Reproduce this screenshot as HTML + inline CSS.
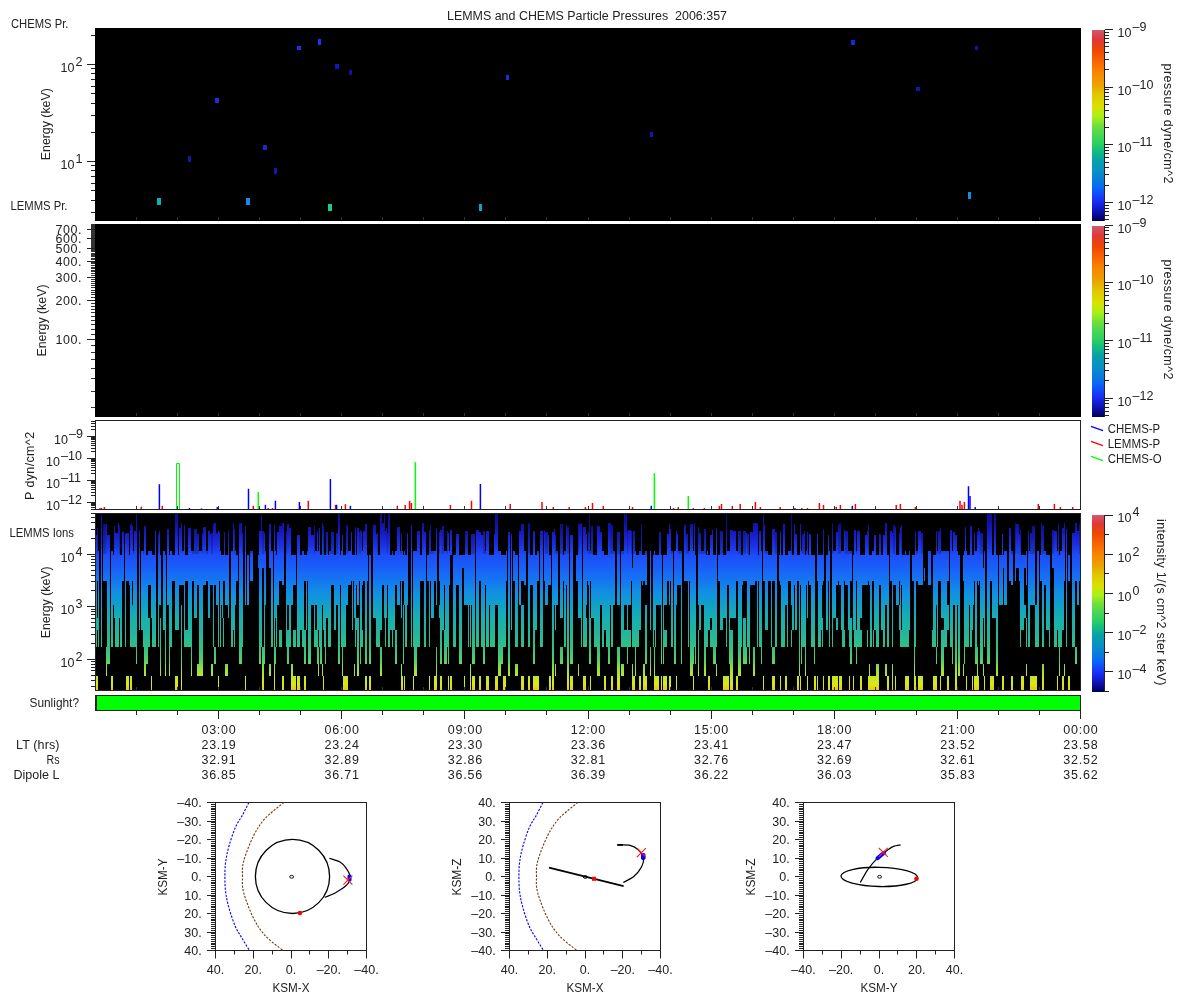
<!DOCTYPE html><html><head><meta charset="utf-8"><style>html,body{margin:0;padding:0;background:#fff;width:1200px;height:1000px;overflow:hidden}</style></head><body><svg width="1200" height="1000" viewBox="0 0 1200 1000" font-family='"Liberation Sans", sans-serif' style="display:block;will-change:transform">
<defs><linearGradient id="cb" x1="0" y1="0" x2="0" y2="1"><stop offset="0.000" stop-color="#d05a70"/><stop offset="0.050" stop-color="#e03838"/><stop offset="0.108" stop-color="#f04800"/><stop offset="0.170" stop-color="#f86800"/><stop offset="0.227" stop-color="#f88800"/><stop offset="0.284" stop-color="#eca000"/><stop offset="0.340" stop-color="#e0c800"/><stop offset="0.400" stop-color="#dce000"/><stop offset="0.455" stop-color="#a8f018"/><stop offset="0.500" stop-color="#70e038"/><stop offset="0.540" stop-color="#50d850"/><stop offset="0.597" stop-color="#28d060"/><stop offset="0.642" stop-color="#10b888"/><stop offset="0.682" stop-color="#08a0a8"/><stop offset="0.740" stop-color="#0890c8"/><stop offset="0.795" stop-color="#0878e0"/><stop offset="0.824" stop-color="#0868f8"/><stop offset="0.892" stop-color="#1830f8"/><stop offset="0.938" stop-color="#1018c0"/><stop offset="0.972" stop-color="#080890"/><stop offset="1.000" stop-color="#000050"/></linearGradient></defs>
<rect x="0" y="0" width="1200" height="1000" fill="#fff"/>
<text x="447" y="20" font-size="12.5" text-anchor="start" textLength="280" lengthAdjust="spacingAndGlyphs" fill="#222" >LEMMS and CHEMS Particle Pressures  2006:357</text>
<rect x="95" y="28" width="986" height="193" fill="#000"/>
<rect x="91" y="212" width="4" height="1" fill="#222"/>
<rect x="91" y="200" width="4" height="1" fill="#222"/>
<rect x="91" y="190" width="4" height="1" fill="#222"/>
<rect x="91" y="183" width="4" height="1" fill="#222"/>
<rect x="91" y="176" width="4" height="1" fill="#222"/>
<rect x="91" y="170" width="4" height="1" fill="#222"/>
<rect x="91" y="165" width="4" height="1" fill="#222"/>
<rect x="87" y="161" width="8" height="1" fill="#222"/>
<rect x="91" y="132" width="4" height="1" fill="#222"/>
<rect x="91" y="115" width="4" height="1" fill="#222"/>
<rect x="91" y="103" width="4" height="1" fill="#222"/>
<rect x="91" y="93" width="4" height="1" fill="#222"/>
<rect x="91" y="86" width="4" height="1" fill="#222"/>
<rect x="91" y="79" width="4" height="1" fill="#222"/>
<rect x="91" y="73" width="4" height="1" fill="#222"/>
<rect x="91" y="68" width="4" height="1" fill="#222"/>
<rect x="87" y="64" width="8" height="1" fill="#222"/>
<rect x="91" y="35" width="4" height="1" fill="#222"/>
<text x="60.5" y="71.8" font-size="12.5" text-anchor="start" fill="#222" >10</text>
<text x="75.5" y="65.8" font-size="12.5" text-anchor="start" fill="#222" >2</text>
<text x="60.5" y="168.8" font-size="12.5" text-anchor="start" fill="#222" >10</text>
<text x="75.5" y="162.8" font-size="12.5" text-anchor="start" fill="#222" >1</text>
<text x="11" y="28" font-size="12.5" text-anchor="start" textLength="57.5" lengthAdjust="spacingAndGlyphs" fill="#222" >CHEMS Pr.</text>
<text x="10.5" y="210" font-size="12.5" text-anchor="start" textLength="57" lengthAdjust="spacingAndGlyphs" fill="#222" >LEMMS Pr.</text>
<text transform="translate(50,124.2) rotate(-90)" font-size="12.5" text-anchor="middle" textLength="72" lengthAdjust="spacingAndGlyphs" fill="#222">Energy (keV)</text>
<rect x="157" y="198" width="4" height="7" fill="#10b0b0"/>
<rect x="188" y="156" width="3" height="6" fill="#1018a0"/>
<rect x="215" y="98" width="4" height="5" fill="#1830e0"/>
<rect x="246" y="198" width="4" height="7" fill="#1888f0"/>
<rect x="263" y="145" width="4" height="5" fill="#1828d0"/>
<rect x="274" y="168" width="3" height="6" fill="#1018b0"/>
<rect x="297" y="46" width="4" height="4" fill="#1830f0"/>
<rect x="318" y="39" width="3" height="6" fill="#1838f8"/>
<rect x="328" y="204" width="4" height="7" fill="#20c890"/>
<rect x="335" y="64" width="4" height="5" fill="#0c18c0"/>
<rect x="349" y="70" width="3" height="5" fill="#0c10a8"/>
<rect x="479" y="204" width="3" height="7" fill="#10a8c0"/>
<rect x="506" y="75" width="3" height="5" fill="#1830e0"/>
<rect x="650" y="132" width="3" height="5" fill="#1018b0"/>
<rect x="851" y="40" width="4" height="5" fill="#1828d8"/>
<rect x="916" y="87" width="4" height="4" fill="#1018b0"/>
<rect x="975" y="46" width="3" height="4" fill="#1018a8"/>
<rect x="968" y="192" width="3" height="7" fill="#1090e0"/>
<rect x="136" y="217" width="1" height="3" fill="#333"/>
<rect x="177" y="217" width="1" height="3" fill="#333"/>
<rect x="218" y="217" width="1" height="3" fill="#333"/>
<rect x="259" y="217" width="1" height="3" fill="#333"/>
<rect x="300" y="217" width="1" height="3" fill="#333"/>
<rect x="341" y="217" width="1" height="3" fill="#333"/>
<rect x="382" y="217" width="1" height="3" fill="#333"/>
<rect x="423" y="217" width="1" height="3" fill="#333"/>
<rect x="464" y="217" width="1" height="3" fill="#333"/>
<rect x="505" y="217" width="1" height="3" fill="#333"/>
<rect x="546" y="217" width="1" height="3" fill="#333"/>
<rect x="588" y="217" width="1" height="3" fill="#333"/>
<rect x="629" y="217" width="1" height="3" fill="#333"/>
<rect x="670" y="217" width="1" height="3" fill="#333"/>
<rect x="711" y="217" width="1" height="3" fill="#333"/>
<rect x="752" y="217" width="1" height="3" fill="#333"/>
<rect x="793" y="217" width="1" height="3" fill="#333"/>
<rect x="834" y="217" width="1" height="3" fill="#333"/>
<rect x="875" y="217" width="1" height="3" fill="#333"/>
<rect x="916" y="217" width="1" height="3" fill="#333"/>
<rect x="957" y="217" width="1" height="3" fill="#333"/>
<rect x="998" y="217" width="1" height="3" fill="#333"/>
<rect x="1039" y="217" width="1" height="3" fill="#333"/>
<rect x="95" y="224" width="986" height="193" fill="#000"/>
<rect x="91" y="407" width="4" height="1" fill="#333"/>
<rect x="91" y="391" width="4" height="1" fill="#333"/>
<rect x="91" y="378" width="4" height="1" fill="#333"/>
<rect x="91" y="368" width="4" height="1" fill="#333"/>
<rect x="91" y="359" width="4" height="1" fill="#333"/>
<rect x="91" y="352" width="4" height="1" fill="#333"/>
<rect x="91" y="345" width="4" height="1" fill="#333"/>
<rect x="87" y="339" width="8" height="1" fill="#222"/>
<rect x="91" y="334" width="4" height="1" fill="#333"/>
<rect x="91" y="329" width="4" height="1" fill="#333"/>
<rect x="91" y="324" width="4" height="1" fill="#333"/>
<rect x="91" y="320" width="4" height="1" fill="#333"/>
<rect x="91" y="316" width="4" height="1" fill="#333"/>
<rect x="91" y="312" width="4" height="1" fill="#333"/>
<rect x="91" y="309" width="4" height="1" fill="#333"/>
<rect x="91" y="306" width="4" height="1" fill="#333"/>
<rect x="91" y="303" width="4" height="1" fill="#333"/>
<rect x="87" y="300" width="8" height="1" fill="#222"/>
<rect x="91" y="297" width="4" height="1" fill="#333"/>
<rect x="91" y="294" width="4" height="1" fill="#333"/>
<rect x="91" y="292" width="4" height="1" fill="#333"/>
<rect x="91" y="290" width="4" height="1" fill="#333"/>
<rect x="91" y="287" width="4" height="1" fill="#333"/>
<rect x="91" y="285" width="4" height="1" fill="#333"/>
<rect x="91" y="283" width="4" height="1" fill="#333"/>
<rect x="91" y="281" width="4" height="1" fill="#333"/>
<rect x="91" y="279" width="4" height="1" fill="#333"/>
<rect x="87" y="277" width="8" height="1" fill="#222"/>
<rect x="91" y="275" width="4" height="1" fill="#333"/>
<rect x="91" y="273" width="4" height="1" fill="#333"/>
<rect x="91" y="271" width="4" height="1" fill="#333"/>
<rect x="91" y="270" width="4" height="1" fill="#333"/>
<rect x="91" y="268" width="4" height="1" fill="#333"/>
<rect x="91" y="267" width="4" height="1" fill="#333"/>
<rect x="91" y="265" width="4" height="1" fill="#333"/>
<rect x="91" y="263" width="4" height="1" fill="#333"/>
<rect x="91" y="262" width="4" height="1" fill="#333"/>
<rect x="87" y="261" width="8" height="1" fill="#222"/>
<rect x="91" y="259" width="4" height="1" fill="#333"/>
<rect x="91" y="258" width="4" height="1" fill="#333"/>
<rect x="91" y="256" width="4" height="1" fill="#333"/>
<rect x="91" y="255" width="4" height="1" fill="#333"/>
<rect x="91" y="254" width="4" height="1" fill="#333"/>
<rect x="91" y="253" width="4" height="1" fill="#333"/>
<rect x="91" y="251" width="4" height="1" fill="#333"/>
<rect x="91" y="250" width="4" height="1" fill="#333"/>
<rect x="91" y="249" width="4" height="1" fill="#333"/>
<rect x="87" y="248" width="8" height="1" fill="#222"/>
<rect x="91" y="247" width="4" height="1" fill="#333"/>
<rect x="91" y="246" width="4" height="1" fill="#333"/>
<rect x="91" y="245" width="4" height="1" fill="#333"/>
<rect x="91" y="244" width="4" height="1" fill="#333"/>
<rect x="91" y="243" width="4" height="1" fill="#333"/>
<rect x="91" y="242" width="4" height="1" fill="#333"/>
<rect x="91" y="241" width="4" height="1" fill="#333"/>
<rect x="91" y="240" width="4" height="1" fill="#333"/>
<rect x="91" y="239" width="4" height="1" fill="#333"/>
<rect x="87" y="238" width="8" height="1" fill="#222"/>
<rect x="91" y="237" width="4" height="1" fill="#333"/>
<rect x="91" y="236" width="4" height="1" fill="#333"/>
<rect x="91" y="235" width="4" height="1" fill="#333"/>
<rect x="91" y="234" width="4" height="1" fill="#333"/>
<rect x="91" y="233" width="4" height="1" fill="#333"/>
<rect x="91" y="232" width="4" height="1" fill="#333"/>
<rect x="91" y="231" width="4" height="1" fill="#333"/>
<rect x="91" y="231" width="4" height="1" fill="#333"/>
<rect x="91" y="230" width="4" height="1" fill="#333"/>
<rect x="87" y="229" width="8" height="1" fill="#222"/>
<rect x="91" y="228" width="4" height="1" fill="#333"/>
<rect x="91" y="227" width="4" height="1" fill="#333"/>
<rect x="91" y="227" width="4" height="1" fill="#333"/>
<rect x="91" y="226" width="4" height="1" fill="#333"/>
<rect x="91" y="225" width="4" height="1" fill="#333"/>
<rect x="91" y="224" width="4" height="1" fill="#333"/>
<rect x="91" y="224" width="4" height="1" fill="#333"/>
<text x="81.5" y="233.9" font-size="12.5" text-anchor="end" textLength="26" lengthAdjust="spacing" fill="#222" >700.</text>
<text x="81.5" y="242.6" font-size="12.5" text-anchor="end" textLength="26" lengthAdjust="spacing" fill="#222" >600.</text>
<text x="81.5" y="253.0" font-size="12.5" text-anchor="end" textLength="26" lengthAdjust="spacing" fill="#222" >500.</text>
<text x="81.5" y="265.6" font-size="12.5" text-anchor="end" textLength="26" lengthAdjust="spacing" fill="#222" >400.</text>
<text x="81.5" y="281.9" font-size="12.5" text-anchor="end" textLength="26" lengthAdjust="spacing" fill="#222" >300.</text>
<text x="81.5" y="304.8" font-size="12.5" text-anchor="end" textLength="26" lengthAdjust="spacing" fill="#222" >200.</text>
<text x="81.5" y="344.1" font-size="12.5" text-anchor="end" textLength="26" lengthAdjust="spacing" fill="#222" >100.</text>
<text transform="translate(45.5,320.5) rotate(-90)" font-size="12.5" text-anchor="middle" textLength="72" lengthAdjust="spacingAndGlyphs" fill="#222">Energy (keV)</text>
<rect x="136" y="413" width="1" height="3" fill="#333"/>
<rect x="177" y="413" width="1" height="3" fill="#333"/>
<rect x="218" y="413" width="1" height="3" fill="#333"/>
<rect x="259" y="413" width="1" height="3" fill="#333"/>
<rect x="300" y="413" width="1" height="3" fill="#333"/>
<rect x="341" y="413" width="1" height="3" fill="#333"/>
<rect x="382" y="413" width="1" height="3" fill="#333"/>
<rect x="423" y="413" width="1" height="3" fill="#333"/>
<rect x="464" y="413" width="1" height="3" fill="#333"/>
<rect x="505" y="413" width="1" height="3" fill="#333"/>
<rect x="546" y="413" width="1" height="3" fill="#333"/>
<rect x="588" y="413" width="1" height="3" fill="#333"/>
<rect x="629" y="413" width="1" height="3" fill="#333"/>
<rect x="670" y="413" width="1" height="3" fill="#333"/>
<rect x="711" y="413" width="1" height="3" fill="#333"/>
<rect x="752" y="413" width="1" height="3" fill="#333"/>
<rect x="793" y="413" width="1" height="3" fill="#333"/>
<rect x="834" y="413" width="1" height="3" fill="#333"/>
<rect x="875" y="413" width="1" height="3" fill="#333"/>
<rect x="916" y="413" width="1" height="3" fill="#333"/>
<rect x="957" y="413" width="1" height="3" fill="#333"/>
<rect x="998" y="413" width="1" height="3" fill="#333"/>
<rect x="1039" y="413" width="1" height="3" fill="#333"/>
<rect x="1092" y="30" width="12" height="191" fill="url(#cb)"/>
<rect x="1104" y="30" width="1" height="191" fill="#222"/>
<rect x="1105" y="29" width="8" height="1" fill="#222"/>
<rect x="1105" y="87" width="8" height="1" fill="#222"/>
<rect x="1105" y="144" width="8" height="1" fill="#222"/>
<rect x="1105" y="202" width="8" height="1" fill="#222"/>
<rect x="1105" y="69" width="4" height="1" fill="#222"/>
<rect x="1105" y="59" width="4" height="1" fill="#222"/>
<rect x="1105" y="52" width="4" height="1" fill="#222"/>
<rect x="1105" y="46" width="4" height="1" fill="#222"/>
<rect x="1105" y="42" width="4" height="1" fill="#222"/>
<rect x="1105" y="38" width="4" height="1" fill="#222"/>
<rect x="1105" y="35" width="4" height="1" fill="#222"/>
<rect x="1105" y="32" width="4" height="1" fill="#222"/>
<rect x="1105" y="127" width="4" height="1" fill="#222"/>
<rect x="1105" y="117" width="4" height="1" fill="#222"/>
<rect x="1105" y="110" width="4" height="1" fill="#222"/>
<rect x="1105" y="104" width="4" height="1" fill="#222"/>
<rect x="1105" y="99" width="4" height="1" fill="#222"/>
<rect x="1105" y="96" width="4" height="1" fill="#222"/>
<rect x="1105" y="92" width="4" height="1" fill="#222"/>
<rect x="1105" y="89" width="4" height="1" fill="#222"/>
<rect x="1105" y="185" width="4" height="1" fill="#222"/>
<rect x="1105" y="174" width="4" height="1" fill="#222"/>
<rect x="1105" y="167" width="4" height="1" fill="#222"/>
<rect x="1105" y="162" width="4" height="1" fill="#222"/>
<rect x="1105" y="157" width="4" height="1" fill="#222"/>
<rect x="1105" y="153" width="4" height="1" fill="#222"/>
<rect x="1105" y="150" width="4" height="1" fill="#222"/>
<rect x="1105" y="147" width="4" height="1" fill="#222"/>
<rect x="1105" y="219" width="4" height="1" fill="#222"/>
<rect x="1105" y="215" width="4" height="1" fill="#222"/>
<rect x="1105" y="211" width="4" height="1" fill="#222"/>
<rect x="1105" y="208" width="4" height="1" fill="#222"/>
<rect x="1105" y="205" width="4" height="1" fill="#222"/>
<text x="1117.5" y="36.8" font-size="12.5" text-anchor="start" fill="#222" >10</text>
<text x="1132.5" y="30.8" font-size="12.5" text-anchor="start" fill="#222" >–9</text>
<text x="1117.5" y="94.5" font-size="12.5" text-anchor="start" fill="#222" >10</text>
<text x="1132.5" y="88.5" font-size="12.5" text-anchor="start" fill="#222" >–10</text>
<text x="1117.5" y="152.1" font-size="12.5" text-anchor="start" fill="#222" >10</text>
<text x="1132.5" y="146.1" font-size="12.5" text-anchor="start" fill="#222" >–11</text>
<text x="1117.5" y="209.8" font-size="12.5" text-anchor="start" fill="#222" >10</text>
<text x="1132.5" y="203.8" font-size="12.5" text-anchor="start" fill="#222" >–12</text>
<text transform="translate(1164,123.5) rotate(90)" font-size="12.5" text-anchor="middle" textLength="120" lengthAdjust="spacing" fill="#222">pressure dyne/cm^2</text>
<rect x="1092" y="226" width="12" height="191" fill="url(#cb)"/>
<rect x="1104" y="226" width="1" height="191" fill="#222"/>
<rect x="1105" y="225" width="8" height="1" fill="#222"/>
<rect x="1105" y="282" width="8" height="1" fill="#222"/>
<rect x="1105" y="340" width="8" height="1" fill="#222"/>
<rect x="1105" y="398" width="8" height="1" fill="#222"/>
<rect x="1105" y="265" width="4" height="1" fill="#222"/>
<rect x="1105" y="255" width="4" height="1" fill="#222"/>
<rect x="1105" y="248" width="4" height="1" fill="#222"/>
<rect x="1105" y="242" width="4" height="1" fill="#222"/>
<rect x="1105" y="238" width="4" height="1" fill="#222"/>
<rect x="1105" y="234" width="4" height="1" fill="#222"/>
<rect x="1105" y="230" width="4" height="1" fill="#222"/>
<rect x="1105" y="227" width="4" height="1" fill="#222"/>
<rect x="1105" y="323" width="4" height="1" fill="#222"/>
<rect x="1105" y="313" width="4" height="1" fill="#222"/>
<rect x="1105" y="305" width="4" height="1" fill="#222"/>
<rect x="1105" y="300" width="4" height="1" fill="#222"/>
<rect x="1105" y="295" width="4" height="1" fill="#222"/>
<rect x="1105" y="291" width="4" height="1" fill="#222"/>
<rect x="1105" y="288" width="4" height="1" fill="#222"/>
<rect x="1105" y="285" width="4" height="1" fill="#222"/>
<rect x="1105" y="380" width="4" height="1" fill="#222"/>
<rect x="1105" y="370" width="4" height="1" fill="#222"/>
<rect x="1105" y="363" width="4" height="1" fill="#222"/>
<rect x="1105" y="358" width="4" height="1" fill="#222"/>
<rect x="1105" y="353" width="4" height="1" fill="#222"/>
<rect x="1105" y="349" width="4" height="1" fill="#222"/>
<rect x="1105" y="346" width="4" height="1" fill="#222"/>
<rect x="1105" y="343" width="4" height="1" fill="#222"/>
<rect x="1105" y="415" width="4" height="1" fill="#222"/>
<rect x="1105" y="411" width="4" height="1" fill="#222"/>
<rect x="1105" y="407" width="4" height="1" fill="#222"/>
<rect x="1105" y="403" width="4" height="1" fill="#222"/>
<rect x="1105" y="400" width="4" height="1" fill="#222"/>
<text x="1117.5" y="232.6" font-size="12.5" text-anchor="start" fill="#222" >10</text>
<text x="1132.5" y="226.6" font-size="12.5" text-anchor="start" fill="#222" >–9</text>
<text x="1117.5" y="290.3" font-size="12.5" text-anchor="start" fill="#222" >10</text>
<text x="1132.5" y="284.3" font-size="12.5" text-anchor="start" fill="#222" >–10</text>
<text x="1117.5" y="347.9" font-size="12.5" text-anchor="start" fill="#222" >10</text>
<text x="1132.5" y="341.9" font-size="12.5" text-anchor="start" fill="#222" >–11</text>
<text x="1117.5" y="405.6" font-size="12.5" text-anchor="start" fill="#222" >10</text>
<text x="1132.5" y="399.6" font-size="12.5" text-anchor="start" fill="#222" >–12</text>
<text transform="translate(1164,319.5) rotate(90)" font-size="12.5" text-anchor="middle" textLength="120" lengthAdjust="spacing" fill="#222">pressure dyne/cm^2</text>
<rect x="95" y="420" width="986" height="90" fill="#fff"/>
<rect x="91" y="509" width="4" height="1" fill="#222"/>
<rect x="91" y="507" width="4" height="1" fill="#222"/>
<rect x="91" y="505" width="4" height="1" fill="#222"/>
<rect x="91" y="504" width="4" height="1" fill="#222"/>
<rect x="91" y="503" width="4" height="1" fill="#222"/>
<rect x="87" y="502" width="8" height="1" fill="#222"/>
<rect x="91" y="495" width="4" height="1" fill="#222"/>
<rect x="91" y="492" width="4" height="1" fill="#222"/>
<rect x="91" y="489" width="4" height="1" fill="#222"/>
<rect x="91" y="487" width="4" height="1" fill="#222"/>
<rect x="91" y="485" width="4" height="1" fill="#222"/>
<rect x="91" y="483" width="4" height="1" fill="#222"/>
<rect x="91" y="482" width="4" height="1" fill="#222"/>
<rect x="91" y="481" width="4" height="1" fill="#222"/>
<rect x="87" y="480" width="8" height="1" fill="#222"/>
<rect x="91" y="473" width="4" height="1" fill="#222"/>
<rect x="91" y="470" width="4" height="1" fill="#222"/>
<rect x="91" y="467" width="4" height="1" fill="#222"/>
<rect x="91" y="465" width="4" height="1" fill="#222"/>
<rect x="91" y="463" width="4" height="1" fill="#222"/>
<rect x="91" y="461" width="4" height="1" fill="#222"/>
<rect x="91" y="460" width="4" height="1" fill="#222"/>
<rect x="91" y="459" width="4" height="1" fill="#222"/>
<rect x="87" y="458" width="8" height="1" fill="#222"/>
<rect x="91" y="451" width="4" height="1" fill="#222"/>
<rect x="91" y="448" width="4" height="1" fill="#222"/>
<rect x="91" y="445" width="4" height="1" fill="#222"/>
<rect x="91" y="443" width="4" height="1" fill="#222"/>
<rect x="91" y="441" width="4" height="1" fill="#222"/>
<rect x="91" y="439" width="4" height="1" fill="#222"/>
<rect x="91" y="438" width="4" height="1" fill="#222"/>
<rect x="91" y="437" width="4" height="1" fill="#222"/>
<rect x="87" y="436" width="8" height="1" fill="#222"/>
<rect x="91" y="429" width="4" height="1" fill="#222"/>
<rect x="91" y="426" width="4" height="1" fill="#222"/>
<rect x="91" y="423" width="4" height="1" fill="#222"/>
<rect x="91" y="421" width="4" height="1" fill="#222"/>
<text x="54" y="443.75" font-size="12.5" text-anchor="start" fill="#222" >10</text>
<text x="69" y="437.75" font-size="12.5" text-anchor="start" fill="#222" >–9</text>
<text x="46" y="465.75" font-size="12.5" text-anchor="start" fill="#222" >10</text>
<text x="61" y="459.75" font-size="12.5" text-anchor="start" fill="#222" >–10</text>
<text x="46" y="487.75" font-size="12.5" text-anchor="start" fill="#222" >10</text>
<text x="61" y="481.75" font-size="12.5" text-anchor="start" fill="#222" >–11</text>
<text x="46" y="509.75" font-size="12.5" text-anchor="start" fill="#222" >10</text>
<text x="61" y="503.75" font-size="12.5" text-anchor="start" fill="#222" >–12</text>
<text transform="translate(34,465.9) rotate(-90)" font-size="12.5" text-anchor="middle" textLength="68" lengthAdjust="spacing" fill="#222">P dyn/cm^2</text>
<rect x="136" y="506" width="1" height="3" fill="#333"/>
<rect x="177" y="506" width="1" height="3" fill="#333"/>
<rect x="218" y="506" width="1" height="3" fill="#333"/>
<rect x="259" y="506" width="1" height="3" fill="#333"/>
<rect x="300" y="506" width="1" height="3" fill="#333"/>
<rect x="341" y="506" width="1" height="3" fill="#333"/>
<rect x="382" y="506" width="1" height="3" fill="#333"/>
<rect x="423" y="506" width="1" height="3" fill="#333"/>
<rect x="464" y="506" width="1" height="3" fill="#333"/>
<rect x="505" y="506" width="1" height="3" fill="#333"/>
<rect x="546" y="506" width="1" height="3" fill="#333"/>
<rect x="588" y="506" width="1" height="3" fill="#333"/>
<rect x="629" y="506" width="1" height="3" fill="#333"/>
<rect x="670" y="506" width="1" height="3" fill="#333"/>
<rect x="711" y="506" width="1" height="3" fill="#333"/>
<rect x="752" y="506" width="1" height="3" fill="#333"/>
<rect x="793" y="506" width="1" height="3" fill="#333"/>
<rect x="834" y="506" width="1" height="3" fill="#333"/>
<rect x="875" y="506" width="1" height="3" fill="#333"/>
<rect x="916" y="506" width="1" height="3" fill="#333"/>
<rect x="957" y="506" width="1" height="3" fill="#333"/>
<rect x="998" y="506" width="1" height="3" fill="#333"/>
<rect x="1039" y="506" width="1" height="3" fill="#333"/>
<rect x="99.25" y="508" width="1.5" height="1" fill="#ff0000"/>
<rect x="100.75" y="508" width="1.5" height="1" fill="#ff0000"/>
<rect x="103.65" y="507" width="1.5" height="2" fill="#ff0000"/>
<rect x="140.55" y="506.7" width="1.5" height="2.3" fill="#ff0000"/>
<rect x="158.65" y="484.2" width="1.5" height="24.8" fill="#0000ff"/>
<rect x="161.55" y="505.8" width="1.5" height="3.2" fill="#ff0000"/>
<rect x="188.65" y="508" width="1.5" height="1" fill="#0000ff"/>
<rect x="200.75" y="508.3" width="1.5" height="0.7" fill="#ff0000"/>
<rect x="216.55" y="507" width="1.5" height="2" fill="#0000ff"/>
<rect x="247.75" y="488.75" width="1.5" height="20.25" fill="#0000ff"/>
<rect x="252.55" y="505.8" width="1.5" height="3.2" fill="#ff0000"/>
<rect x="257.55" y="492" width="1.5" height="17" fill="#00ff00"/>
<rect x="264.65" y="504.8" width="1.5" height="4.2" fill="#0000ff"/>
<rect x="267.55" y="508" width="1.5" height="1" fill="#ff0000"/>
<rect x="271.75" y="508" width="1.5" height="1" fill="#ff0000"/>
<rect x="274.65" y="500.8" width="1.5" height="8.2" fill="#0000ff"/>
<rect x="298.65" y="502" width="1.5" height="7" fill="#0000ff"/>
<rect x="307.55" y="500.8" width="1.5" height="8.2" fill="#ff0000"/>
<rect x="329.65" y="479" width="1.5" height="30" fill="#0000ff"/>
<rect x="334.85" y="504.8" width="1.5" height="4.2" fill="#ff0000"/>
<rect x="335.85" y="504.8" width="1.5" height="4.2" fill="#0000ff"/>
<rect x="344.65" y="504.2" width="1.5" height="4.8" fill="#ff0000"/>
<rect x="349.65" y="505.8" width="1.5" height="3.2" fill="#0000ff"/>
<rect x="396.55" y="505.8" width="1.5" height="3.2" fill="#ff0000"/>
<rect x="404.45" y="505" width="1.5" height="4" fill="#ff0000"/>
<rect x="408.85" y="500.8" width="1.5" height="8.2" fill="#ff0000"/>
<rect x="410.65" y="503" width="1.5" height="6" fill="#ff0000"/>
<rect x="414.65" y="462.1" width="1.5" height="46.9" fill="#00ff00"/>
<rect x="449.65" y="505" width="1.5" height="4" fill="#ff0000"/>
<rect x="470.75" y="500.8" width="1.5" height="8.2" fill="#ff0000"/>
<rect x="479.65" y="484" width="1.5" height="25" fill="#0000ff"/>
<rect x="509.45" y="504" width="1.5" height="5" fill="#ff0000"/>
<rect x="541.25" y="501.9" width="1.5" height="7.1" fill="#ff0000"/>
<rect x="552.55" y="507" width="1.5" height="2" fill="#ff0000"/>
<rect x="568.45" y="507" width="1.5" height="2" fill="#ff0000"/>
<rect x="584.65" y="507" width="1.5" height="2" fill="#ff0000"/>
<rect x="591.75" y="502.9" width="1.5" height="6.1" fill="#ff0000"/>
<rect x="602.55" y="506" width="1.5" height="3" fill="#ff0000"/>
<rect x="631.75" y="507" width="1.5" height="2" fill="#ff0000"/>
<rect x="650.5" y="505.8" width="1.5" height="3.2" fill="#0000ff"/>
<rect x="653.65" y="473.1" width="1.5" height="35.9" fill="#00ff00"/>
<rect x="672.75" y="508" width="1.5" height="1" fill="#ff0000"/>
<rect x="677.55" y="507" width="1.5" height="2" fill="#ff0000"/>
<rect x="687.55" y="496" width="1.5" height="13" fill="#00ff00"/>
<rect x="692.55" y="508" width="1.5" height="1" fill="#ff0000"/>
<rect x="703.65" y="508" width="1.5" height="1" fill="#ff0000"/>
<rect x="718.65" y="506" width="1.5" height="3" fill="#ff0000"/>
<rect x="720.75" y="504" width="1.5" height="5" fill="#ff0000"/>
<rect x="731.55" y="506" width="1.5" height="3" fill="#ff0000"/>
<rect x="739.45" y="504" width="1.5" height="5" fill="#ff0000"/>
<rect x="754.65" y="501.9" width="1.5" height="7.1" fill="#ff0000"/>
<rect x="759.65" y="507" width="1.5" height="2" fill="#ff0000"/>
<rect x="779.45" y="507" width="1.5" height="2" fill="#ff0000"/>
<rect x="794.25" y="508" width="1.5" height="1" fill="#ff0000"/>
<rect x="800.95" y="508" width="1.5" height="1" fill="#ff0000"/>
<rect x="806.75" y="508" width="1.5" height="1" fill="#ff0000"/>
<rect x="818.65" y="503" width="1.5" height="6" fill="#ff0000"/>
<rect x="822.75" y="505" width="1.5" height="4" fill="#ff0000"/>
<rect x="835.5" y="507" width="1.5" height="2" fill="#ff0000"/>
<rect x="839.65" y="505" width="1.5" height="4" fill="#ff0000"/>
<rect x="851.55" y="505.8" width="1.5" height="3.2" fill="#0000ff"/>
<rect x="854.65" y="504" width="1.5" height="5" fill="#ff0000"/>
<rect x="895.5" y="505" width="1.5" height="4" fill="#ff0000"/>
<rect x="899.65" y="504" width="1.5" height="5" fill="#ff0000"/>
<rect x="914.65" y="507" width="1.5" height="2" fill="#ff0000"/>
<rect x="959.25" y="500.8" width="1.5" height="8.2" fill="#ff0000"/>
<rect x="961.25" y="505" width="1.5" height="4" fill="#ff0000"/>
<rect x="963.65" y="502" width="1.5" height="7" fill="#ff0000"/>
<rect x="967.75" y="486.25" width="1.5" height="22.75" fill="#0000ff"/>
<rect x="969.25" y="496" width="1.5" height="13" fill="#0000ff"/>
<rect x="974.45" y="507" width="1.5" height="2" fill="#0000ff"/>
<rect x="1037.55" y="504" width="1.5" height="5" fill="#ff0000"/>
<rect x="1053.65" y="504" width="1.5" height="5" fill="#ff0000"/>
<rect x="1059.65" y="507" width="1.5" height="2" fill="#ff0000"/>
<rect x="1071.95" y="507" width="1.5" height="2" fill="#ff0000"/>
<path d="M176.5 509 V463.5 H179.5 V509" fill="none" stroke="#00ff00" stroke-width="1"/>
<rect x="95.5" y="420.5" width="985" height="89" fill="none" stroke="#222" stroke-width="1"/>
<line x1="1091" y1="426.3" x2="1103" y2="430.7" stroke="#0000ff" stroke-width="1.3"/>
<text x="1107.7" y="433" font-size="12.5" text-anchor="start" textLength="52.5" lengthAdjust="spacingAndGlyphs" fill="#222" >CHEMS-P</text>
<line x1="1091" y1="441.3" x2="1103" y2="445.7" stroke="#ff0000" stroke-width="1.3"/>
<text x="1107.7" y="448" font-size="12.5" text-anchor="start" textLength="52.5" lengthAdjust="spacingAndGlyphs" fill="#222" >LEMMS-P</text>
<line x1="1091" y1="456.3" x2="1103" y2="460.7" stroke="#00ff00" stroke-width="1.3"/>
<text x="1107.7" y="463" font-size="12.5" text-anchor="start" textLength="54" lengthAdjust="spacingAndGlyphs" fill="#222" >CHEMS-O</text>
<defs><linearGradient id="spec" x1="0" y1="0" x2="0" y2="1"><stop offset="0.0056" stop-color="#0c0c90"/><stop offset="0.0562" stop-color="#1010a8"/><stop offset="0.1011" stop-color="#1418c0"/><stop offset="0.1798" stop-color="#1c30e0"/><stop offset="0.2360" stop-color="#1c4cf8"/><stop offset="0.3090" stop-color="#1860f8"/><stop offset="0.3820" stop-color="#1478f0"/><stop offset="0.4607" stop-color="#1094e0"/><stop offset="0.5169" stop-color="#10a0c8"/><stop offset="0.5899" stop-color="#18b0b0"/><stop offset="0.6573" stop-color="#20b4a0"/><stop offset="0.7528" stop-color="#30c088"/><stop offset="0.8258" stop-color="#50d068"/><stop offset="0.8708" stop-color="#90e040"/><stop offset="0.9213" stop-color="#c4e428"/><stop offset="0.9607" stop-color="#dce818"/><stop offset="1.0000" stop-color="#e4c810"/></linearGradient></defs>
<rect x="95" y="513" width="986" height="178" fill="url(#spec)"/>
<path fill="#000" fill-opacity="0.18" d="M97 514h1v40h-1zM99 514h2v40h-2zM103 514h3v40h-3zM110 514h1v40h-1zM119 514h1v40h-1zM129 514h1v40h-1zM133 514h1v40h-1zM137 514h2v40h-2zM139 514h1v40h-1zM143 514h1v40h-1zM150 514h1v40h-1zM158 514h1v40h-1zM161 514h2v40h-2zM185 514h3v40h-3zM192 514h2v40h-2zM194 514h3v40h-3zM197 514h2v40h-2zM202 514h1v40h-1zM206 514h2v40h-2zM211 514h2v40h-2zM223 514h1v40h-1zM224 514h1v40h-1zM228 514h1v40h-1zM229 514h1v40h-1zM234 514h1v40h-1zM238 514h1v40h-1zM242 514h1v40h-1zM244 514h1v40h-1zM249 514h1v40h-1zM250 514h3v40h-3zM262 514h2v40h-2zM265 514h1v40h-1zM266 514h2v40h-2zM268 514h1v40h-1zM273 514h1v40h-1zM276 514h1v40h-1zM285 514h1v40h-1zM286 514h1v40h-1zM307 514h1v40h-1zM314 514h1v40h-1zM323 514h1v40h-1zM326 514h2v40h-2zM329 514h2v40h-2zM331 514h3v40h-3zM336 514h2v40h-2zM340 514h1v40h-1zM346 514h2v40h-2zM352 514h1v40h-1zM356 514h1v40h-1zM359 514h1v40h-1zM360 514h1v40h-1zM371 514h2v40h-2zM377 514h1v40h-1zM378 514h2v40h-2zM387 514h1v40h-1zM392 514h1v40h-1zM400 514h1v40h-1zM401 514h1v40h-1zM403 514h1v40h-1zM405 514h2v40h-2zM408 514h1v40h-1zM409 514h1v40h-1zM429 514h1v40h-1zM430 514h1v40h-1zM431 514h3v40h-3zM437 514h2v40h-2zM439 514h1v40h-1zM442 514h2v40h-2zM447 514h1v40h-1zM453 514h3v40h-3zM459 514h3v40h-3zM465 514h3v40h-3zM468 514h1v40h-1zM471 514h1v40h-1zM472 514h3v40h-3zM483 514h2v40h-2zM485 514h1v40h-1zM510 514h1v40h-1zM526 514h1v40h-1zM527 514h1v40h-1zM528 514h2v40h-2zM537 514h2v40h-2zM543 514h1v40h-1zM545 514h3v40h-3zM555 514h1v40h-1zM556 514h2v40h-2zM558 514h1v40h-1zM560 514h3v40h-3zM563 514h1v40h-1zM564 514h2v40h-2zM567 514h2v40h-2zM569 514h1v40h-1zM578 514h1v40h-1zM582 514h1v40h-1zM588 514h1v40h-1zM589 514h1v40h-1zM590 514h1v40h-1zM591 514h2v40h-2zM593 514h1v40h-1zM604 514h2v40h-2zM610 514h1v40h-1zM611 514h2v40h-2zM613 514h2v40h-2zM617 514h3v40h-3zM621 514h3v40h-3zM627 514h1v40h-1zM631 514h1v40h-1zM633 514h2v40h-2zM636 514h3v40h-3zM639 514h2v40h-2zM641 514h1v40h-1zM642 514h1v40h-1zM645 514h2v40h-2zM655 514h1v40h-1zM659 514h2v40h-2zM662 514h1v40h-1zM671 514h2v40h-2zM678 514h3v40h-3zM681 514h1v40h-1zM686 514h2v40h-2zM688 514h1v40h-1zM697 514h1v40h-1zM698 514h1v40h-1zM699 514h2v40h-2zM701 514h3v40h-3zM704 514h2v40h-2zM708 514h2v40h-2zM720 514h3v40h-3zM723 514h3v40h-3zM726 514h1v40h-1zM738 514h3v40h-3zM741 514h1v40h-1zM743 514h3v40h-3zM747 514h2v40h-2zM758 514h1v40h-1zM762 514h1v40h-1zM765 514h3v40h-3zM771 514h1v40h-1zM775 514h2v40h-2zM791 514h1v40h-1zM792 514h2v40h-2zM797 514h2v40h-2zM802 514h2v40h-2zM804 514h1v40h-1zM806 514h1v40h-1zM807 514h1v40h-1zM815 514h1v40h-1zM816 514h1v40h-1zM823 514h1v40h-1zM832 514h1v40h-1zM838 514h1v40h-1zM839 514h2v40h-2zM845 514h3v40h-3zM848 514h1v40h-1zM849 514h1v40h-1zM850 514h2v40h-2zM856 514h1v40h-1zM868 514h1v40h-1zM870 514h2v40h-2zM876 514h3v40h-3zM879 514h2v40h-2zM889 514h1v40h-1zM893 514h2v40h-2zM899 514h1v40h-1zM901 514h1v40h-1zM906 514h3v40h-3zM909 514h1v40h-1zM912 514h2v40h-2zM915 514h1v40h-1zM916 514h2v40h-2zM921 514h2v40h-2zM923 514h1v40h-1zM924 514h1v40h-1zM925 514h1v40h-1zM931 514h1v40h-1zM932 514h1v40h-1zM933 514h3v40h-3zM936 514h1v40h-1zM938 514h2v40h-2zM940 514h1v40h-1zM961 514h1v40h-1zM962 514h1v40h-1zM969 514h1v40h-1zM972 514h1v40h-1zM974 514h1v40h-1zM980 514h3v40h-3zM984 514h1v40h-1zM996 514h2v40h-2zM1008 514h1v40h-1zM1011 514h2v40h-2zM1015 514h1v40h-1zM1020 514h1v40h-1zM1028 514h1v40h-1zM1030 514h2v40h-2zM1032 514h3v40h-3zM1040 514h1v40h-1zM1041 514h1v40h-1zM1042 514h2v40h-2zM1046 514h3v40h-3zM1049 514h1v40h-1zM1051 514h1v40h-1zM1052 514h2v40h-2zM1058 514h1v40h-1zM1067 514h1v40h-1zM1079 514h1v40h-1z"/>
<path fill="#000" d="M96 514h1v21h-1zM96 647h1v29h-1zM97 514h1v14h-1zM97 581h1v37h-1zM97 630h1v46h-1zM98 514h1v37h-1zM98 647h1v44h-1zM99 514h2v177h-2zM101 647h1v44h-1zM102 514h1v177h-1zM103 514h3v10h-3zM103 581h3v110h-3zM106 514h1v10h-1zM106 581h1v66h-1zM106 676h1v15h-1zM107 514h3v21h-3zM107 664h3v27h-3zM110 514h1v177h-1zM111 514h2v37h-2zM111 647h2v29h-2zM113 514h1v41h-1zM113 605h1v86h-1zM114 514h1v12h-1zM114 618h1v73h-1zM115 514h3v19h-3zM115 647h3v44h-3zM118 514h1v9h-1zM118 647h1v44h-1zM119 514h1v11h-1zM119 618h1v73h-1zM120 514h2v41h-2zM120 647h2v44h-2zM122 514h2v18h-2zM122 581h2v110h-2zM124 514h1v177h-1zM125 514h1v20h-1zM125 647h1v44h-1zM126 514h3v19h-3zM126 581h3v95h-3zM129 514h1v41h-1zM129 585h1v106h-1zM130 514h2v10h-2zM130 647h2v29h-2zM132 514h1v12h-1zM132 581h1v24h-1zM132 647h1v44h-1zM133 514h1v37h-1zM133 647h1v44h-1zM134 514h2v17h-2zM134 647h2v44h-2zM136 664h1v27h-1zM137 514h2v177h-2zM139 514h1v16h-1zM139 630h1v61h-1zM140 514h1v177h-1zM141 514h2v37h-2zM141 630h2v61h-2zM143 514h1v37h-1zM143 647h1v44h-1zM144 514h2v12h-2zM144 676h2v15h-2zM146 514h2v41h-2zM146 664h2v27h-2zM148 514h2v37h-2zM148 585h2v33h-2zM148 647h2v44h-2zM150 514h1v37h-1zM150 585h1v106h-1zM151 514h1v37h-1zM151 618h1v58h-1zM152 514h3v41h-3zM152 647h3v44h-3zM155 514h1v17h-1zM155 647h1v44h-1zM156 514h2v177h-2zM158 514h1v20h-1zM158 647h1v44h-1zM159 514h1v17h-1zM159 605h1v86h-1zM160 514h1v41h-1zM160 605h1v13h-1zM160 676h1v15h-1zM161 514h2v177h-2zM163 514h2v37h-2zM163 630h2v61h-2zM165 514h1v41h-1zM165 676h1v15h-1zM166 514h1v177h-1zM167 514h2v15h-2zM167 605h2v86h-2zM169 514h1v41h-1zM169 676h1v15h-1zM170 514h2v37h-2zM170 647h2v44h-2zM172 514h2v41h-2zM172 581h2v110h-2zM174 514h1v41h-1zM174 581h1v110h-1zM175 630h3v46h-3zM178 514h1v41h-1zM178 630h1v61h-1zM179 514h2v14h-2zM179 585h2v106h-2zM181 514h1v9h-1zM181 585h1v20h-1zM182 514h2v37h-2zM182 585h2v106h-2zM184 514h1v11h-1zM184 647h1v44h-1zM185 514h3v41h-3zM185 581h3v49h-3zM185 647h3v44h-3zM188 514h3v14h-3zM188 647h3v44h-3zM191 514h1v37h-1zM191 676h1v15h-1zM192 514h2v37h-2zM192 581h2v110h-2zM194 514h3v15h-3zM194 618h3v73h-3zM197 514h2v20h-2zM197 585h2v79h-2zM197 676h2v15h-2zM199 514h3v37h-3zM199 676h3v15h-3zM202 514h1v19h-1zM202 676h1v15h-1zM203 514h3v13h-3zM203 585h3v106h-3zM206 514h2v37h-2zM206 581h2v110h-2zM208 514h2v17h-2zM208 618h2v73h-2zM210 514h1v20h-1zM210 585h1v106h-1zM211 514h2v19h-2zM211 585h2v79h-2zM211 676h2v15h-2zM213 514h1v10h-1zM213 647h1v44h-1zM214 514h2v9h-2zM214 585h2v62h-2zM214 664h2v27h-2zM216 514h2v19h-2zM216 605h2v86h-2zM218 514h1v17h-1zM218 647h1v29h-1zM219 514h1v18h-1zM219 581h1v110h-1zM220 514h1v37h-1zM220 647h1v44h-1zM221 514h1v41h-1zM221 605h1v86h-1zM222 514h1v41h-1zM222 618h1v73h-1zM223 514h1v41h-1zM223 581h1v37h-1zM223 647h1v44h-1zM224 514h1v18h-1zM224 581h1v110h-1zM225 514h3v41h-3zM225 605h3v59h-3zM225 676h3v15h-3zM228 514h1v17h-1zM228 618h1v73h-1zM229 514h1v177h-1zM230 514h1v177h-1zM231 514h2v37h-2zM231 647h2v44h-2zM233 514h1v9h-1zM233 630h1v61h-1zM234 514h1v15h-1zM234 647h1v44h-1zM235 514h1v37h-1zM235 605h1v86h-1zM236 514h2v41h-2zM236 581h2v110h-2zM238 514h1v177h-1zM239 514h3v9h-3zM239 664h3v27h-3zM242 514h1v19h-1zM242 647h1v44h-1zM243 514h1v177h-1zM244 514h1v177h-1zM245 514h1v12h-1zM245 605h1v71h-1zM246 514h1v177h-1zM247 514h2v41h-2zM247 605h2v86h-2zM249 514h1v177h-1zM250 514h3v37h-3zM250 581h3v110h-3zM253 514h2v177h-2zM255 514h3v177h-3zM258 514h1v41h-1zM258 568h1v123h-1zM259 514h2v17h-2zM259 664h2v27h-2zM261 647h1v44h-1zM262 514h2v17h-2zM262 568h2v79h-2zM264 514h1v19h-1zM264 664h1v27h-1zM265 514h1v37h-1zM265 605h1v86h-1zM266 514h2v177h-2zM268 514h1v177h-1zM269 514h2v10h-2zM269 568h2v96h-2zM269 676h2v15h-2zM271 514h2v37h-2zM271 647h2v44h-2zM273 514h1v177h-1zM274 514h1v11h-1zM275 514h1v37h-1zM275 618h1v29h-1zM275 664h1v27h-1zM276 514h1v41h-1zM276 647h1v44h-1zM277 514h2v18h-2zM277 605h2v86h-2zM279 514h3v12h-3zM279 581h3v49h-3zM279 647h3v44h-3zM282 514h2v9h-2zM282 585h2v91h-2zM284 514h1v177h-1zM285 514h1v177h-1zM286 514h1v17h-1zM286 647h1v44h-1zM287 514h2v10h-2zM287 605h2v25h-2zM287 664h2v27h-2zM289 514h2v14h-2zM289 647h2v44h-2zM291 514h2v41h-2zM291 605h2v59h-2zM293 514h3v41h-3zM293 585h3v45h-3zM293 647h3v29h-3zM296 514h1v177h-1zM297 514h3v21h-3zM297 647h3v29h-3zM300 514h2v41h-2zM300 630h2v61h-2zM302 514h2v37h-2zM302 647h2v44h-2zM304 514h2v41h-2zM304 581h2v49h-2zM304 664h2v12h-2zM306 514h1v41h-1zM306 630h1v61h-1zM307 514h1v37h-1zM307 581h1v110h-1zM308 514h3v13h-3zM308 664h3v27h-3zM311 514h3v21h-3zM311 605h3v86h-3zM314 514h1v12h-1zM314 647h1v44h-1zM315 514h2v37h-2zM315 605h2v25h-2zM315 647h2v44h-2zM317 514h1v17h-1zM317 664h1v27h-1zM318 514h1v37h-1zM318 630h1v17h-1zM318 676h1v15h-1zM319 514h1v14h-1zM319 647h1v44h-1zM320 514h2v41h-2zM320 664h2v27h-2zM322 514h1v9h-1zM322 605h1v59h-1zM322 676h1v15h-1zM323 514h1v12h-1zM323 630h1v46h-1zM324 514h1v41h-1zM324 647h1v44h-1zM325 514h1v41h-1zM325 664h1v27h-1zM326 514h2v18h-2zM326 618h2v73h-2zM328 514h1v41h-1zM328 647h1v44h-1zM329 514h2v37h-2zM329 647h2v44h-2zM331 514h3v18h-3zM331 585h3v106h-3zM334 514h2v41h-2zM334 630h2v61h-2zM336 514h2v19h-2zM336 605h2v86h-2zM338 664h2v27h-2zM340 514h1v41h-1zM340 585h1v106h-1zM341 514h1v37h-1zM341 647h1v44h-1zM342 514h1v21h-1zM342 676h1v15h-1zM343 514h3v41h-3zM343 647h3v29h-3zM346 514h2v11h-2zM346 605h2v71h-2zM348 514h3v37h-3zM348 585h3v106h-3zM351 514h1v18h-1zM351 581h1v110h-1zM352 514h1v41h-1zM352 630h1v61h-1zM353 514h1v41h-1zM353 581h1v110h-1zM354 514h1v41h-1zM354 618h1v46h-1zM354 676h1v15h-1zM355 514h1v13h-1zM355 647h1v44h-1zM356 514h1v41h-1zM356 585h1v33h-1zM356 630h1v61h-1zM357 514h2v14h-2zM357 605h2v13h-2zM357 676h2v15h-2zM359 514h1v18h-1zM359 581h1v110h-1zM360 514h1v16h-1zM360 664h1v27h-1zM361 514h1v17h-1zM361 647h1v44h-1zM362 514h1v37h-1zM362 585h1v45h-1zM362 647h1v44h-1zM363 514h2v17h-2zM363 581h2v110h-2zM365 514h2v10h-2zM365 664h2v12h-2zM367 514h1v41h-1zM367 581h1v110h-1zM368 514h1v177h-1zM369 514h2v41h-2zM369 664h2v12h-2zM371 514h2v177h-2zM373 514h3v11h-3zM373 618h3v73h-3zM376 514h1v20h-1zM376 647h1v44h-1zM377 514h1v19h-1zM377 647h1v44h-1zM378 514h2v41h-2zM378 647h2v44h-2zM380 630h2v17h-2zM380 676h2v15h-2zM382 514h2v9h-2zM382 585h2v106h-2zM384 618h1v73h-1zM385 514h1v17h-1zM385 647h1v44h-1zM386 514h1v14h-1zM386 618h1v73h-1zM387 514h1v19h-1zM387 585h1v106h-1zM388 647h2v44h-2zM390 514h2v41h-2zM390 630h2v61h-2zM392 514h1v37h-1zM392 647h1v44h-1zM393 514h2v41h-2zM393 630h2v61h-2zM395 514h2v37h-2zM395 585h2v45h-2zM395 664h2v27h-2zM397 514h3v13h-3zM397 605h3v86h-3zM400 514h1v37h-1zM400 581h1v110h-1zM401 514h1v19h-1zM401 618h1v46h-1zM402 514h1v37h-1zM402 581h1v95h-1zM403 514h1v41h-1zM403 581h1v24h-1zM403 664h1v27h-1zM404 514h1v37h-1zM404 605h1v71h-1zM405 514h2v41h-2zM405 647h2v44h-2zM407 514h1v19h-1zM407 605h1v86h-1zM408 514h1v177h-1zM409 514h1v177h-1zM410 514h1v177h-1zM411 514h1v11h-1zM411 647h1v44h-1zM412 514h1v177h-1zM413 514h1v37h-1zM413 647h1v29h-1zM414 514h3v37h-3zM414 676h3v15h-3zM417 514h3v17h-3zM417 647h3v44h-3zM420 514h2v41h-2zM420 581h2v110h-2zM422 514h2v9h-2zM422 581h2v110h-2zM424 514h1v18h-1zM424 647h1v44h-1zM425 514h1v18h-1zM425 647h1v44h-1zM426 514h1v177h-1zM427 514h2v41h-2zM427 581h2v110h-2zM429 514h1v16h-1zM429 647h1v29h-1zM430 514h1v11h-1zM430 581h1v110h-1zM431 514h3v37h-3zM431 618h3v73h-3zM434 514h2v37h-2zM434 581h2v95h-2zM436 514h1v14h-1zM436 605h1v42h-1zM437 514h2v177h-2zM439 514h1v18h-1zM439 581h1v24h-1zM439 618h1v73h-1zM440 514h2v16h-2zM440 664h2v12h-2zM442 514h2v12h-2zM442 630h2v61h-2zM444 514h1v37h-1zM444 585h1v45h-1zM444 664h1v27h-1zM445 514h2v37h-2zM445 664h2v27h-2zM447 514h1v17h-1zM447 647h1v44h-1zM448 514h1v19h-1zM448 664h1v12h-1zM449 514h1v37h-1zM449 585h1v106h-1zM450 514h2v16h-2zM450 555h2v121h-2zM452 514h1v177h-1zM453 514h3v41h-3zM453 647h3v44h-3zM456 514h3v20h-3zM456 585h3v106h-3zM459 514h3v41h-3zM459 664h3v27h-3zM462 514h2v41h-2zM462 568h2v123h-2zM464 514h1v41h-1zM464 605h1v71h-1zM465 514h3v17h-3zM465 605h3v86h-3zM468 514h1v41h-1zM468 647h1v44h-1zM469 514h1v41h-1zM469 605h1v86h-1zM470 514h1v41h-1zM470 647h1v17h-1zM471 514h1v20h-1zM471 605h1v86h-1zM472 514h3v20h-3zM472 664h3v12h-3zM475 514h1v177h-1zM476 514h3v16h-3zM476 647h3v44h-3zM479 514h2v18h-2zM479 581h2v95h-2zM481 514h2v21h-2zM481 647h2v44h-2zM483 514h2v17h-2zM483 664h2v27h-2zM485 514h1v37h-1zM485 585h1v106h-1zM486 514h3v17h-3zM486 647h3v29h-3zM489 514h1v41h-1zM489 605h1v86h-1zM490 514h3v41h-3zM490 647h3v44h-3zM493 514h1v41h-1zM493 647h1v44h-1zM494 514h1v20h-1zM494 647h1v44h-1zM495 605h3v71h-3zM498 514h3v37h-3zM498 676h3v15h-3zM501 514h2v41h-2zM501 664h2v27h-2zM503 514h3v41h-3zM503 647h3v29h-3zM506 514h1v37h-1zM506 581h1v110h-1zM507 514h1v177h-1zM508 514h2v18h-2zM508 676h2v15h-2zM510 514h1v177h-1zM511 514h1v20h-1zM511 630h1v61h-1zM512 514h1v177h-1zM513 514h2v37h-2zM513 581h2v110h-2zM515 514h3v41h-3zM515 647h3v17h-3zM515 676h3v15h-3zM518 514h1v177h-1zM519 514h2v17h-2zM519 605h2v86h-2zM521 514h3v10h-3zM521 581h3v24h-3zM521 647h3v29h-3zM524 514h2v37h-2zM524 585h2v106h-2zM526 514h1v177h-1zM527 514h1v177h-1zM528 514h2v9h-2zM528 647h2v29h-2zM530 514h3v41h-3zM530 585h3v106h-3zM533 514h2v17h-2zM533 664h2v12h-2zM535 514h2v41h-2zM535 630h2v46h-2zM537 514h2v37h-2zM537 581h2v95h-2zM539 514h1v177h-1zM540 514h2v17h-2zM540 647h2v44h-2zM542 514h1v16h-1zM542 647h1v44h-1zM543 514h1v177h-1zM544 514h1v17h-1zM544 581h1v110h-1zM545 514h3v18h-3zM545 605h3v86h-3zM548 514h1v21h-1zM548 585h1v106h-1zM549 514h2v41h-2zM549 585h2v91h-2zM551 514h1v177h-1zM552 514h2v18h-2zM554 514h1v15h-1zM554 605h1v86h-1zM555 514h1v21h-1zM555 630h1v34h-1zM555 676h1v15h-1zM556 514h2v37h-2zM556 605h2v86h-2zM558 514h1v177h-1zM559 514h1v177h-1zM560 514h3v10h-3zM560 618h3v29h-3zM560 664h3v27h-3zM563 514h1v41h-1zM563 581h1v110h-1zM564 514h2v37h-2zM564 647h2v44h-2zM566 514h1v11h-1zM566 585h1v106h-1zM567 514h2v13h-2zM569 514h1v177h-1zM570 514h3v21h-3zM570 664h3v12h-3zM573 514h2v177h-2zM575 514h1v177h-1zM576 514h2v41h-2zM576 581h2v110h-2zM578 514h1v9h-1zM578 618h1v46h-1zM578 676h1v15h-1zM579 514h2v10h-2zM579 618h2v73h-2zM581 514h1v9h-1zM581 647h1v44h-1zM582 514h1v177h-1zM583 514h3v13h-3zM583 647h3v29h-3zM586 514h1v20h-1zM586 605h1v13h-1zM586 647h1v44h-1zM587 514h1v37h-1zM587 581h1v110h-1zM588 514h1v18h-1zM588 585h1v106h-1zM589 664h1v27h-1zM590 514h1v37h-1zM590 581h1v37h-1zM590 664h1v12h-1zM591 514h2v12h-2zM591 618h2v73h-2zM593 514h1v41h-1zM593 618h1v73h-1zM594 514h3v41h-3zM594 647h3v44h-3zM597 514h3v12h-3zM597 676h3v15h-3zM600 514h2v18h-2zM600 605h2v86h-2zM602 514h2v37h-2zM602 647h2v44h-2zM604 514h2v41h-2zM604 630h2v46h-2zM606 514h2v41h-2zM606 647h2v44h-2zM608 514h2v9h-2zM608 664h2v27h-2zM610 514h1v9h-1zM610 605h1v86h-1zM611 514h2v11h-2zM611 647h2v29h-2zM613 514h2v37h-2zM613 605h2v86h-2zM615 514h2v177h-2zM617 514h3v18h-3zM617 605h3v42h-3zM620 514h1v177h-1zM621 514h3v37h-3zM621 647h3v17h-3zM621 676h3v15h-3zM624 605h3v25h-3zM624 647h3v44h-3zM627 514h1v17h-1zM627 664h1v27h-1zM628 514h3v16h-3zM628 605h3v25h-3zM628 647h3v44h-3zM631 514h1v17h-1zM631 581h1v110h-1zM632 514h1v54h-1zM632 647h1v17h-1zM633 514h2v17h-2zM633 647h2v29h-2zM635 514h1v37h-1zM635 676h1v15h-1zM636 514h3v41h-3zM636 647h3v44h-3zM639 514h2v37h-2zM639 630h2v46h-2zM641 514h1v10h-1zM641 581h1v110h-1zM642 514h1v41h-1zM642 585h1v106h-1zM643 514h2v41h-2zM643 581h2v83h-2zM645 514h2v37h-2zM645 585h2v20h-2zM645 664h2v12h-2zM647 514h1v177h-1zM648 514h1v177h-1zM649 514h1v177h-1zM650 514h1v37h-1zM650 630h1v17h-1zM650 676h1v15h-1zM651 514h2v177h-2zM653 514h1v41h-1zM653 647h1v44h-1zM654 514h1v37h-1zM654 630h1v17h-1zM655 514h1v41h-1zM655 647h1v29h-1zM656 514h3v41h-3zM656 605h3v71h-3zM659 514h2v18h-2zM659 605h2v86h-2zM661 514h1v41h-1zM661 664h1v12h-1zM662 514h1v177h-1zM663 514h1v41h-1zM663 664h1v12h-1zM664 514h3v41h-3zM664 605h3v25h-3zM664 647h3v29h-3zM667 514h2v20h-2zM667 581h2v110h-2zM669 514h1v10h-1zM669 605h1v71h-1zM670 514h1v15h-1zM670 581h1v95h-1zM671 514h2v37h-2zM671 647h2v44h-2zM673 514h1v177h-1zM674 514h2v37h-2zM674 664h2v27h-2zM676 514h1v17h-1zM676 605h1v71h-1zM677 514h1v20h-1zM677 585h1v106h-1zM678 514h3v37h-3zM678 585h3v106h-3zM681 514h1v37h-1zM681 664h1v27h-1zM682 514h2v177h-2zM684 514h2v11h-2zM684 581h2v110h-2zM686 514h2v20h-2zM686 581h2v110h-2zM688 514h1v37h-1zM688 647h1v44h-1zM689 514h1v37h-1zM689 581h1v110h-1zM690 514h3v10h-3zM690 676h3v15h-3zM693 514h1v37h-1zM693 664h1v12h-1zM694 514h1v9h-1zM694 647h1v44h-1zM695 514h1v41h-1zM695 664h1v27h-1zM696 514h1v177h-1zM697 514h1v177h-1zM698 514h1v13h-1zM698 605h1v25h-1zM698 676h1v15h-1zM699 514h2v19h-2zM699 630h2v61h-2zM701 514h3v37h-3zM701 605h3v86h-3zM704 514h2v15h-2zM704 676h2v15h-2zM706 514h1v41h-1zM706 647h1v44h-1zM707 514h1v37h-1zM707 647h1v44h-1zM708 514h2v41h-2zM708 630h2v46h-2zM710 514h2v21h-2zM710 618h2v12h-2zM710 647h2v44h-2zM712 514h1v16h-1zM712 647h1v44h-1zM713 514h3v41h-3zM713 664h3v27h-3zM716 514h1v14h-1zM716 647h1v17h-1zM716 676h1v15h-1zM717 514h1v177h-1zM718 514h2v41h-2zM718 581h2v110h-2zM720 514h3v17h-3zM720 630h3v61h-3zM723 514h3v41h-3zM723 618h3v58h-3zM726 647h1v29h-1zM727 514h2v37h-2zM727 585h2v91h-2zM729 514h1v37h-1zM729 664h1v27h-1zM730 514h3v16h-3zM730 618h3v12h-3zM733 514h3v17h-3zM733 618h3v73h-3zM736 514h2v37h-2zM736 581h2v95h-2zM738 514h3v17h-3zM738 676h3v15h-3zM741 514h1v41h-1zM741 647h1v44h-1zM742 514h1v41h-1zM742 585h1v106h-1zM743 514h3v17h-3zM743 581h3v37h-3zM743 664h3v27h-3zM746 514h1v19h-1zM746 581h1v66h-1zM746 664h1v27h-1zM747 514h2v20h-2zM747 647h2v44h-2zM749 514h1v41h-1zM749 664h1v27h-1zM750 514h3v18h-3zM750 585h3v106h-3zM753 514h2v9h-2zM753 585h2v62h-2zM753 676h2v15h-2zM755 514h2v9h-2zM755 581h2v110h-2zM757 514h1v9h-1zM757 647h1v44h-1zM758 514h1v41h-1zM758 581h1v110h-1zM759 514h2v17h-2zM759 647h2v44h-2zM761 514h1v37h-1zM761 664h1v27h-1zM762 514h1v177h-1zM763 581h1v95h-1zM764 514h1v11h-1zM764 581h1v110h-1zM765 514h3v37h-3zM765 630h3v61h-3zM768 514h3v41h-3zM768 581h3v110h-3zM771 514h1v41h-1zM771 647h1v44h-1zM772 514h3v15h-3zM772 581h3v66h-3zM772 664h3v12h-3zM775 514h2v18h-2zM775 647h2v44h-2zM777 514h1v177h-1zM778 514h1v177h-1zM779 514h1v41h-1zM779 581h1v110h-1zM780 514h1v17h-1zM780 585h1v91h-1zM781 514h2v41h-2zM781 647h2v44h-2zM783 514h2v10h-2zM783 647h2v44h-2zM785 514h2v41h-2zM785 605h2v71h-2zM787 514h1v41h-1zM787 647h1v44h-1zM788 514h3v37h-3zM788 581h3v110h-3zM791 605h1v25h-1zM791 647h1v44h-1zM792 514h2v41h-2zM792 630h2v61h-2zM794 514h1v10h-1zM794 585h1v106h-1zM795 514h2v20h-2zM795 630h2v61h-2zM797 514h2v41h-2zM797 581h2v95h-2zM799 514h1v41h-1zM799 676h1v15h-1zM800 514h1v10h-1zM800 585h1v91h-1zM801 514h1v37h-1zM801 664h1v27h-1zM802 514h2v20h-2zM802 647h2v44h-2zM804 514h1v17h-1zM804 647h1v44h-1zM805 514h1v41h-1zM805 676h1v15h-1zM806 514h1v37h-1zM806 585h1v106h-1zM807 514h1v18h-1zM807 618h1v58h-1zM808 514h1v41h-1zM808 581h1v110h-1zM809 514h2v20h-2zM809 585h2v106h-2zM811 514h3v41h-3zM811 647h3v44h-3zM814 514h1v41h-1zM814 664h1v12h-1zM815 514h1v162h-1zM816 514h1v177h-1zM817 514h1v20h-1zM817 581h1v95h-1zM818 514h3v41h-3zM818 647h3v44h-3zM821 514h1v41h-1zM821 630h1v61h-1zM822 514h1v41h-1zM822 585h1v33h-1zM822 647h1v44h-1zM823 514h1v15h-1zM823 581h1v95h-1zM824 514h1v177h-1zM825 514h1v177h-1zM826 514h2v41h-2zM826 630h2v61h-2zM828 514h1v21h-1zM828 581h1v95h-1zM829 514h1v37h-1zM829 647h1v29h-1zM830 514h2v177h-2zM832 514h1v9h-1zM832 647h1v29h-1zM833 514h3v37h-3zM833 618h3v58h-3zM836 514h2v18h-2zM836 585h2v33h-2zM836 630h2v46h-2zM838 514h1v11h-1zM838 581h1v110h-1zM839 514h2v9h-2zM839 585h2v91h-2zM841 514h1v37h-1zM841 630h1v46h-1zM842 514h2v37h-2zM842 647h2v44h-2zM844 514h1v16h-1zM844 581h1v49h-1zM844 647h1v44h-1zM845 514h3v17h-3zM845 585h3v106h-3zM848 514h1v37h-1zM848 630h1v61h-1zM849 514h1v37h-1zM849 647h1v29h-1zM850 514h2v37h-2zM850 581h2v37h-2zM850 664h2v27h-2zM852 514h1v177h-1zM853 514h1v41h-1zM853 630h1v46h-1zM854 514h2v16h-2zM854 647h2v44h-2zM856 514h1v37h-1zM856 581h1v49h-1zM856 664h1v27h-1zM857 514h3v17h-3zM857 647h3v44h-3zM860 514h2v41h-2zM860 618h2v12h-2zM860 647h2v29h-2zM862 514h3v41h-3zM862 585h3v106h-3zM865 514h2v21h-2zM865 585h2v106h-2zM867 514h1v17h-1zM867 585h1v45h-1zM867 647h1v44h-1zM868 514h1v11h-1zM868 581h1v95h-1zM869 514h1v41h-1zM869 585h1v79h-1zM870 514h2v41h-2zM870 647h2v29h-2zM872 514h1v37h-1zM872 581h1v95h-1zM873 514h1v37h-1zM873 581h1v49h-1zM873 647h1v29h-1zM874 514h2v21h-2zM874 630h2v46h-2zM876 514h3v41h-3zM876 647h3v17h-3zM879 514h2v20h-2zM879 585h2v106h-2zM881 514h2v41h-2zM881 630h2v61h-2zM883 514h2v21h-2zM883 647h2v44h-2zM885 514h2v9h-2zM885 605h2v59h-2zM885 676h2v15h-2zM887 514h2v41h-2zM887 647h2v29h-2zM889 514h1v177h-1zM890 514h2v17h-2zM890 581h2v110h-2zM892 514h1v19h-1zM892 647h1v17h-1zM893 514h2v11h-2zM893 585h2v106h-2zM895 514h1v13h-1zM895 585h1v91h-1zM896 514h3v41h-3zM896 605h3v86h-3zM899 514h1v19h-1zM899 581h1v24h-1zM899 630h1v61h-1zM900 514h1v13h-1zM900 647h1v44h-1zM901 514h1v11h-1zM901 585h1v45h-1zM901 647h1v44h-1zM902 514h3v41h-3zM902 647h3v44h-3zM905 514h1v37h-1zM905 647h1v29h-1zM906 514h3v41h-3zM906 647h3v29h-3zM909 514h1v37h-1zM909 630h1v61h-1zM910 514h2v177h-2zM912 514h2v41h-2zM912 581h2v110h-2zM914 514h1v41h-1zM915 514h1v17h-1zM915 647h1v29h-1zM916 514h2v37h-2zM916 581h2v110h-2zM918 514h3v17h-3zM918 585h3v91h-3zM921 514h2v19h-2zM921 585h2v91h-2zM923 514h1v177h-1zM924 514h1v54h-1zM924 581h1v110h-1zM925 514h1v177h-1zM926 514h2v177h-2zM928 514h3v37h-3zM928 585h3v106h-3zM931 514h1v177h-1zM932 514h1v116h-1zM932 647h1v44h-1zM933 514h3v41h-3zM933 647h3v29h-3zM936 514h1v17h-1zM936 605h1v42h-1zM936 664h1v12h-1zM937 514h1v37h-1zM937 647h1v44h-1zM938 514h2v17h-2zM938 581h2v110h-2zM940 514h1v14h-1zM940 581h1v95h-1zM941 514h3v37h-3zM941 618h3v12h-3zM941 676h3v15h-3zM944 514h3v37h-3zM944 647h3v44h-3zM947 514h2v37h-2zM947 581h2v24h-2zM947 630h2v46h-2zM949 514h1v177h-1zM950 514h2v16h-2zM950 647h2v44h-2zM952 514h1v37h-1zM952 664h1v27h-1zM953 514h2v18h-2zM953 605h2v86h-2zM955 514h2v21h-2zM957 514h1v37h-1zM957 605h1v86h-1zM958 514h2v41h-2zM958 676h2v15h-2zM960 514h1v177h-1zM961 514h1v177h-1zM962 514h1v177h-1zM963 514h1v41h-1zM963 581h1v83h-1zM963 676h1v15h-1zM964 514h1v37h-1zM964 664h1v27h-1zM965 514h1v13h-1zM965 647h1v44h-1zM966 514h1v37h-1zM966 647h1v29h-1zM967 514h2v41h-2zM967 647h2v44h-2zM969 514h1v41h-1zM969 605h1v86h-1zM970 514h2v12h-2zM970 647h2v44h-2zM972 514h1v41h-1zM972 630h1v46h-1zM973 514h1v41h-1zM973 605h1v86h-1zM974 514h1v19h-1zM974 581h1v95h-1zM975 514h2v37h-2zM975 664h2v12h-2zM977 514h1v18h-1zM977 581h1v66h-1zM978 514h1v14h-1zM978 585h1v91h-1zM979 514h1v17h-1zM979 581h1v110h-1zM980 514h3v19h-3zM980 664h3v27h-3zM983 514h1v54h-1zM983 618h1v46h-1zM983 676h1v15h-1zM984 514h1v37h-1zM984 647h1v29h-1zM985 514h2v177h-2zM987 664h3v27h-3zM990 581h2v95h-2zM992 514h2v41h-2zM992 618h2v58h-2zM994 618h2v73h-2zM996 514h2v41h-2zM996 676h2v15h-2zM998 514h1v177h-1zM999 514h3v41h-3zM999 605h3v86h-3zM1002 514h1v20h-1zM1002 605h1v71h-1zM1003 514h1v41h-1zM1003 568h1v108h-1zM1004 514h3v37h-3zM1004 605h3v86h-3zM1007 514h1v177h-1zM1008 514h1v177h-1zM1009 514h2v14h-2zM1009 581h2v110h-2zM1011 514h2v37h-2zM1011 585h2v91h-2zM1013 514h1v177h-1zM1014 514h1v177h-1zM1015 514h1v9h-1zM1015 581h1v110h-1zM1016 514h3v10h-3zM1016 568h3v123h-3zM1019 514h1v20h-1zM1019 581h1v110h-1zM1020 514h1v15h-1zM1020 647h1v44h-1zM1021 514h3v41h-3zM1021 630h3v46h-3zM1024 514h2v41h-2zM1024 568h2v37h-2zM1024 618h2v73h-2zM1026 514h1v37h-1zM1026 585h1v33h-1zM1026 647h1v17h-1zM1026 676h1v15h-1zM1027 514h1v177h-1zM1028 514h1v17h-1zM1028 647h1v44h-1zM1029 514h1v37h-1zM1029 647h1v44h-1zM1030 514h2v19h-2zM1030 605h2v71h-2zM1032 514h3v12h-3zM1032 605h3v71h-3zM1035 514h2v91h-2zM1035 647h2v29h-2zM1037 514h2v37h-2zM1037 647h2v44h-2zM1039 514h1v177h-1zM1040 514h1v41h-1zM1040 581h1v110h-1zM1041 514h1v9h-1zM1041 581h1v110h-1zM1042 514h2v11h-2zM1042 647h2v17h-2zM1044 514h2v37h-2zM1044 585h2v106h-2zM1046 514h3v41h-3zM1046 630h3v61h-3zM1049 514h1v41h-1zM1049 647h1v44h-1zM1050 514h1v177h-1zM1051 514h1v177h-1zM1052 514h2v16h-2zM1052 568h2v123h-2zM1054 514h3v17h-3zM1054 647h3v44h-3zM1057 514h1v37h-1zM1057 630h1v46h-1zM1058 514h1v10h-1zM1058 647h1v44h-1zM1059 514h1v41h-1zM1059 676h1v15h-1zM1060 514h2v37h-2zM1060 647h2v44h-2zM1062 514h2v14h-2zM1062 630h2v46h-2zM1064 514h1v9h-1zM1064 581h1v83h-1zM1064 676h1v15h-1zM1065 514h1v177h-1zM1066 514h1v15h-1zM1066 647h1v44h-1zM1067 514h1v177h-1zM1068 514h2v41h-2zM1068 581h2v95h-2zM1070 514h2v177h-2zM1072 514h3v19h-3zM1072 647h3v44h-3zM1075 514h2v9h-2zM1075 581h2v66h-2zM1075 664h2v27h-2zM1077 514h2v17h-2zM1077 605h2v86h-2zM1079 514h1v10h-1zM1079 581h1v110h-1zM95 513h986v1h-986z"/>
<rect x="95.5" y="513.5" width="985" height="177" fill="none" stroke="#222" stroke-width="1"/>
<rect x="91" y="686" width="4" height="1" fill="#222"/>
<rect x="91" y="680" width="4" height="1" fill="#222"/>
<rect x="91" y="675" width="4" height="1" fill="#222"/>
<rect x="91" y="670" width="4" height="1" fill="#222"/>
<rect x="91" y="667" width="4" height="1" fill="#222"/>
<rect x="91" y="664" width="4" height="1" fill="#222"/>
<rect x="91" y="661" width="4" height="1" fill="#222"/>
<rect x="87" y="659" width="8" height="1" fill="#222"/>
<rect x="91" y="643" width="4" height="1" fill="#222"/>
<rect x="91" y="634" width="4" height="1" fill="#222"/>
<rect x="91" y="627" width="4" height="1" fill="#222"/>
<rect x="91" y="622" width="4" height="1" fill="#222"/>
<rect x="91" y="618" width="4" height="1" fill="#222"/>
<rect x="91" y="614" width="4" height="1" fill="#222"/>
<rect x="91" y="611" width="4" height="1" fill="#222"/>
<rect x="91" y="609" width="4" height="1" fill="#222"/>
<rect x="87" y="606" width="8" height="1" fill="#222"/>
<rect x="91" y="590" width="4" height="1" fill="#222"/>
<rect x="91" y="581" width="4" height="1" fill="#222"/>
<rect x="91" y="575" width="4" height="1" fill="#222"/>
<rect x="91" y="570" width="4" height="1" fill="#222"/>
<rect x="91" y="565" width="4" height="1" fill="#222"/>
<rect x="91" y="562" width="4" height="1" fill="#222"/>
<rect x="91" y="559" width="4" height="1" fill="#222"/>
<rect x="91" y="556" width="4" height="1" fill="#222"/>
<rect x="87" y="554" width="8" height="1" fill="#222"/>
<rect x="91" y="538" width="4" height="1" fill="#222"/>
<rect x="91" y="529" width="4" height="1" fill="#222"/>
<rect x="91" y="522" width="4" height="1" fill="#222"/>
<rect x="91" y="517" width="4" height="1" fill="#222"/>
<rect x="91" y="513" width="4" height="1" fill="#222"/>
<text x="60.5" y="561.5" font-size="12.5" text-anchor="start" fill="#222" >10</text>
<text x="75.5" y="555.5" font-size="12.5" text-anchor="start" fill="#222" >4</text>
<text x="60.5" y="614.0" font-size="12.5" text-anchor="start" fill="#222" >10</text>
<text x="75.5" y="608.0" font-size="12.5" text-anchor="start" fill="#222" >3</text>
<text x="60.5" y="666.5" font-size="12.5" text-anchor="start" fill="#222" >10</text>
<text x="75.5" y="660.5" font-size="12.5" text-anchor="start" fill="#222" >2</text>
<text x="9.5" y="537" font-size="12.5" text-anchor="start" textLength="64.5" lengthAdjust="spacingAndGlyphs" fill="#222" >LEMMS Ions</text>
<text transform="translate(50,602.3) rotate(-90)" font-size="12.5" text-anchor="middle" textLength="72" lengthAdjust="spacingAndGlyphs" fill="#222">Energy (keV)</text>
<rect x="136" y="687" width="1" height="3" fill="#333"/>
<rect x="177" y="687" width="1" height="3" fill="#333"/>
<rect x="218" y="687" width="1" height="3" fill="#333"/>
<rect x="259" y="687" width="1" height="3" fill="#333"/>
<rect x="300" y="687" width="1" height="3" fill="#333"/>
<rect x="341" y="687" width="1" height="3" fill="#333"/>
<rect x="382" y="687" width="1" height="3" fill="#333"/>
<rect x="423" y="687" width="1" height="3" fill="#333"/>
<rect x="464" y="687" width="1" height="3" fill="#333"/>
<rect x="505" y="687" width="1" height="3" fill="#333"/>
<rect x="546" y="687" width="1" height="3" fill="#333"/>
<rect x="588" y="687" width="1" height="3" fill="#333"/>
<rect x="629" y="687" width="1" height="3" fill="#333"/>
<rect x="670" y="687" width="1" height="3" fill="#333"/>
<rect x="711" y="687" width="1" height="3" fill="#333"/>
<rect x="752" y="687" width="1" height="3" fill="#333"/>
<rect x="793" y="687" width="1" height="3" fill="#333"/>
<rect x="834" y="687" width="1" height="3" fill="#333"/>
<rect x="875" y="687" width="1" height="3" fill="#333"/>
<rect x="916" y="687" width="1" height="3" fill="#333"/>
<rect x="957" y="687" width="1" height="3" fill="#333"/>
<rect x="998" y="687" width="1" height="3" fill="#333"/>
<rect x="1039" y="687" width="1" height="3" fill="#333"/>
<rect x="1092" y="515" width="12" height="177" fill="url(#cb)"/>
<rect x="1104" y="515" width="1" height="177" fill="#222"/>
<rect x="1105" y="515" width="8" height="1" fill="#222"/>
<rect x="1105" y="554" width="8" height="1" fill="#222"/>
<rect x="1105" y="593" width="8" height="1" fill="#222"/>
<rect x="1105" y="632" width="8" height="1" fill="#222"/>
<rect x="1105" y="671" width="8" height="1" fill="#222"/>
<rect x="1105" y="534" width="4" height="1" fill="#222"/>
<rect x="1105" y="573" width="4" height="1" fill="#222"/>
<rect x="1105" y="613" width="4" height="1" fill="#222"/>
<rect x="1105" y="652" width="4" height="1" fill="#222"/>
<rect x="1105" y="691" width="4" height="1" fill="#222"/>
<text x="1117.5" y="522.4" font-size="12.5" text-anchor="start" fill="#222" >10</text>
<text x="1132.5" y="516.4" font-size="12.5" text-anchor="start" fill="#222" >4</text>
<text x="1117.5" y="561.6" font-size="12.5" text-anchor="start" fill="#222" >10</text>
<text x="1132.5" y="555.6" font-size="12.5" text-anchor="start" fill="#222" >2</text>
<text x="1117.5" y="600.8" font-size="12.5" text-anchor="start" fill="#222" >10</text>
<text x="1132.5" y="594.8" font-size="12.5" text-anchor="start" fill="#222" >0</text>
<text x="1117.5" y="640.0" font-size="12.5" text-anchor="start" fill="#222" >10</text>
<text x="1132.5" y="634.0" font-size="12.5" text-anchor="start" fill="#222" >–2</text>
<text x="1117.5" y="679.2" font-size="12.5" text-anchor="start" fill="#222" >10</text>
<text x="1132.5" y="673.2" font-size="12.5" text-anchor="start" fill="#222" >–4</text>
<text transform="translate(1156.5,602.2) rotate(90)" font-size="12.5" text-anchor="middle" textLength="166.4" lengthAdjust="spacing" fill="#222">intensity 1/(s cm^2 ster keV)</text>
<rect x="95.5" y="695.5" width="985" height="15" fill="#00ff00" stroke="#222" stroke-width="1"/>
<rect x="95" y="695" width="2" height="16" fill="#222"/>
<text x="79" y="707" font-size="12.5" text-anchor="end" textLength="49.5" lengthAdjust="spacingAndGlyphs" fill="#222" >Sunlight?</text>
<rect x="136" y="711" width="1" height="4" fill="#222"/>
<rect x="177" y="711" width="1" height="4" fill="#222"/>
<rect x="218" y="711" width="1" height="8" fill="#222"/>
<rect x="259" y="711" width="1" height="4" fill="#222"/>
<rect x="300" y="711" width="1" height="4" fill="#222"/>
<rect x="341" y="711" width="1" height="8" fill="#222"/>
<rect x="382" y="711" width="1" height="4" fill="#222"/>
<rect x="423" y="711" width="1" height="4" fill="#222"/>
<rect x="464" y="711" width="1" height="8" fill="#222"/>
<rect x="505" y="711" width="1" height="4" fill="#222"/>
<rect x="546" y="711" width="1" height="4" fill="#222"/>
<rect x="588" y="711" width="1" height="8" fill="#222"/>
<rect x="629" y="711" width="1" height="4" fill="#222"/>
<rect x="670" y="711" width="1" height="4" fill="#222"/>
<rect x="711" y="711" width="1" height="8" fill="#222"/>
<rect x="752" y="711" width="1" height="4" fill="#222"/>
<rect x="793" y="711" width="1" height="4" fill="#222"/>
<rect x="834" y="711" width="1" height="8" fill="#222"/>
<rect x="875" y="711" width="1" height="4" fill="#222"/>
<rect x="916" y="711" width="1" height="4" fill="#222"/>
<rect x="957" y="711" width="1" height="8" fill="#222"/>
<rect x="998" y="711" width="1" height="4" fill="#222"/>
<rect x="1039" y="711" width="1" height="4" fill="#222"/>
<rect x="1080" y="711" width="1" height="8" fill="#222"/>
<text x="218.6" y="734" font-size="12.5" text-anchor="middle" textLength="34.4" lengthAdjust="spacing" fill="#222" >03:00</text>
<text x="341.8" y="734" font-size="12.5" text-anchor="middle" textLength="34.4" lengthAdjust="spacing" fill="#222" >06:00</text>
<text x="464.9" y="734" font-size="12.5" text-anchor="middle" textLength="34.4" lengthAdjust="spacing" fill="#222" >09:00</text>
<text x="588.0" y="734" font-size="12.5" text-anchor="middle" textLength="34.4" lengthAdjust="spacing" fill="#222" >12:00</text>
<text x="711.1" y="734" font-size="12.5" text-anchor="middle" textLength="34.4" lengthAdjust="spacing" fill="#222" >15:00</text>
<text x="834.2" y="734" font-size="12.5" text-anchor="middle" textLength="34.4" lengthAdjust="spacing" fill="#222" >18:00</text>
<text x="957.4" y="734" font-size="12.5" text-anchor="middle" textLength="34.4" lengthAdjust="spacing" fill="#222" >21:00</text>
<text x="1080.5" y="734" font-size="12.5" text-anchor="middle" textLength="34.4" lengthAdjust="spacing" fill="#222" >00:00</text>
<text x="218.6" y="749" font-size="12.5" text-anchor="middle" textLength="34.4" lengthAdjust="spacing" fill="#222" >23.19</text>
<text x="341.8" y="749" font-size="12.5" text-anchor="middle" textLength="34.4" lengthAdjust="spacing" fill="#222" >23.24</text>
<text x="464.9" y="749" font-size="12.5" text-anchor="middle" textLength="34.4" lengthAdjust="spacing" fill="#222" >23.30</text>
<text x="588.0" y="749" font-size="12.5" text-anchor="middle" textLength="34.4" lengthAdjust="spacing" fill="#222" >23.36</text>
<text x="711.1" y="749" font-size="12.5" text-anchor="middle" textLength="34.4" lengthAdjust="spacing" fill="#222" >23.41</text>
<text x="834.2" y="749" font-size="12.5" text-anchor="middle" textLength="34.4" lengthAdjust="spacing" fill="#222" >23.47</text>
<text x="957.4" y="749" font-size="12.5" text-anchor="middle" textLength="34.4" lengthAdjust="spacing" fill="#222" >23.52</text>
<text x="1080.5" y="749" font-size="12.5" text-anchor="middle" textLength="34.4" lengthAdjust="spacing" fill="#222" >23.58</text>
<text x="218.6" y="763.5" font-size="12.5" text-anchor="middle" textLength="34.4" lengthAdjust="spacing" fill="#222" >32.91</text>
<text x="341.8" y="763.5" font-size="12.5" text-anchor="middle" textLength="34.4" lengthAdjust="spacing" fill="#222" >32.89</text>
<text x="464.9" y="763.5" font-size="12.5" text-anchor="middle" textLength="34.4" lengthAdjust="spacing" fill="#222" >32.86</text>
<text x="588.0" y="763.5" font-size="12.5" text-anchor="middle" textLength="34.4" lengthAdjust="spacing" fill="#222" >32.81</text>
<text x="711.1" y="763.5" font-size="12.5" text-anchor="middle" textLength="34.4" lengthAdjust="spacing" fill="#222" >32.76</text>
<text x="834.2" y="763.5" font-size="12.5" text-anchor="middle" textLength="34.4" lengthAdjust="spacing" fill="#222" >32.69</text>
<text x="957.4" y="763.5" font-size="12.5" text-anchor="middle" textLength="34.4" lengthAdjust="spacing" fill="#222" >32.61</text>
<text x="1080.5" y="763.5" font-size="12.5" text-anchor="middle" textLength="34.4" lengthAdjust="spacing" fill="#222" >32.52</text>
<text x="218.6" y="778.5" font-size="12.5" text-anchor="middle" textLength="34.4" lengthAdjust="spacing" fill="#222" >36.85</text>
<text x="341.8" y="778.5" font-size="12.5" text-anchor="middle" textLength="34.4" lengthAdjust="spacing" fill="#222" >36.71</text>
<text x="464.9" y="778.5" font-size="12.5" text-anchor="middle" textLength="34.4" lengthAdjust="spacing" fill="#222" >36.56</text>
<text x="588.0" y="778.5" font-size="12.5" text-anchor="middle" textLength="34.4" lengthAdjust="spacing" fill="#222" >36.39</text>
<text x="711.1" y="778.5" font-size="12.5" text-anchor="middle" textLength="34.4" lengthAdjust="spacing" fill="#222" >36.22</text>
<text x="834.2" y="778.5" font-size="12.5" text-anchor="middle" textLength="34.4" lengthAdjust="spacing" fill="#222" >36.03</text>
<text x="957.4" y="778.5" font-size="12.5" text-anchor="middle" textLength="34.4" lengthAdjust="spacing" fill="#222" >35.83</text>
<text x="1080.5" y="778.5" font-size="12.5" text-anchor="middle" textLength="34.4" lengthAdjust="spacing" fill="#222" >35.62</text>
<text x="59.5" y="749" font-size="12.5" text-anchor="end" textLength="43.5" lengthAdjust="spacing" fill="#222" >LT (hrs)</text>
<text x="59.5" y="763.5" font-size="12.5" text-anchor="end" textLength="13" lengthAdjust="spacingAndGlyphs" fill="#222" >Rs</text>
<text x="59.5" y="778.5" font-size="12.5" text-anchor="end" textLength="46" lengthAdjust="spacing" fill="#222" >Dipole L</text>
<rect x="215.5" y="802.5" width="151.0" height="148.0" fill="none" stroke="#222" stroke-width="1"/>
<path d="M207.0 802.5H215.5M211.0 804.5H215.5M211.0 806.5H215.5M211.0 808.5H215.5M211.0 809.5H215.5M211.0 811.5H215.5M211.0 813.5H215.5M211.0 815.5H215.5M211.0 817.5H215.5M211.0 819.5H215.5M207.0 821.5H215.5M211.0 822.5H215.5M211.0 824.5H215.5M211.0 826.5H215.5M211.0 828.5H215.5M211.0 830.5H215.5M211.0 832.5H215.5M211.0 833.5H215.5M211.0 835.5H215.5M211.0 837.5H215.5M207.0 839.5H215.5M211.0 841.5H215.5M211.0 843.5H215.5M211.0 845.5H215.5M211.0 846.5H215.5M211.0 848.5H215.5M211.0 850.5H215.5M211.0 852.5H215.5M211.0 854.5H215.5M211.0 856.5H215.5M207.0 858.5H215.5M211.0 859.5H215.5M211.0 861.5H215.5M211.0 863.5H215.5M211.0 865.5H215.5M211.0 867.5H215.5M211.0 869.5H215.5M211.0 870.5H215.5M211.0 872.5H215.5M211.0 874.5H215.5M207.0 876.5H215.5M211.0 878.5H215.5M211.0 880.5H215.5M211.0 882.5H215.5M211.0 883.5H215.5M211.0 885.5H215.5M211.0 887.5H215.5M211.0 889.5H215.5M211.0 891.5H215.5M211.0 893.5H215.5M207.0 895.5H215.5M211.0 896.5H215.5M211.0 898.5H215.5M211.0 900.5H215.5M211.0 902.5H215.5M211.0 904.5H215.5M211.0 906.5H215.5M211.0 907.5H215.5M211.0 909.5H215.5M211.0 911.5H215.5M207.0 913.5H215.5M211.0 915.5H215.5M211.0 917.5H215.5M211.0 919.5H215.5M211.0 920.5H215.5M211.0 922.5H215.5M211.0 924.5H215.5M211.0 926.5H215.5M211.0 928.5H215.5M211.0 930.5H215.5M207.0 932.5H215.5M211.0 933.5H215.5M211.0 935.5H215.5M211.0 937.5H215.5M211.0 939.5H215.5M211.0 941.5H215.5M211.0 943.5H215.5M211.0 944.5H215.5M211.0 946.5H215.5M211.0 948.5H215.5M207.0 950.5H215.5" stroke="#222" stroke-width="1" fill="none"/>
<text x="201.7" y="807.1" font-size="12.5" text-anchor="end" fill="#222" >–40.</text>
<text x="201.7" y="825.6" font-size="12.5" text-anchor="end" fill="#222" >–30.</text>
<text x="201.7" y="844.1" font-size="12.5" text-anchor="end" fill="#222" >–20.</text>
<text x="201.7" y="862.6" font-size="12.5" text-anchor="end" fill="#222" >–10.</text>
<text x="201.7" y="881.1" font-size="12.5" text-anchor="end" fill="#222" >0.</text>
<text x="201.7" y="899.6" font-size="12.5" text-anchor="end" fill="#222" >10.</text>
<text x="201.7" y="918.1" font-size="12.5" text-anchor="end" fill="#222" >20.</text>
<text x="201.7" y="936.6" font-size="12.5" text-anchor="end" fill="#222" >30.</text>
<text x="201.7" y="955.1" font-size="12.5" text-anchor="end" fill="#222" >40.</text>
<path d="M215.5 950.5V958.5M234.5 950.5V954.5M253.5 950.5V958.5M272.5 950.5V954.5M291.5 950.5V958.5M309.5 950.5V954.5M328.5 950.5V958.5M347.5 950.5V954.5M366.5 950.5V958.5" stroke="#222" stroke-width="1" fill="none"/>
<text x="215.5" y="974" font-size="12.5" text-anchor="middle" fill="#222" >40.</text>
<text x="253.2" y="974" font-size="12.5" text-anchor="middle" fill="#222" >20.</text>
<text x="291.0" y="974" font-size="12.5" text-anchor="middle" fill="#222" >0.</text>
<text x="328.8" y="974" font-size="12.5" text-anchor="middle" fill="#222" >–20.</text>
<text x="366.5" y="974" font-size="12.5" text-anchor="middle" fill="#222" >–40.</text>
<text x="291.0" y="991.5" font-size="12.5" text-anchor="middle" textLength="37" lengthAdjust="spacingAndGlyphs" fill="#222" >KSM-X</text>
<text transform="translate(167,877) rotate(-90)" font-size="12.5" text-anchor="middle" textLength="37" lengthAdjust="spacingAndGlyphs" fill="#222">KSM-Y</text>
<path d="M248.8 802.5C247.8 804.6 244.7 810.9 242.5 815.0C240.3 819.1 237.7 822.1 235.4 827.3C233.2 832.5 230.6 840.3 229.0 846.0C227.4 851.7 226.4 856.4 225.7 861.6C225.0 866.8 224.9 871.9 224.9 877.0C224.9 882.1 225.0 887.2 225.7 892.4C226.4 897.6 227.4 902.3 229.0 908.0C230.6 913.7 233.2 921.5 235.4 926.7C237.7 931.9 240.2 935.0 242.5 939.0C244.8 943.0 248.3 948.6 249.5 950.5" fill="none" stroke="#0000ff" stroke-width="1.1" stroke-dasharray="2.2 1.4"/>
<path d="M283.8 802.5C280.7 805.1 270.3 812.8 265.2 818.4C260.1 824.0 256.9 829.1 253.3 836.3C249.7 843.5 245.4 854.8 243.6 861.6C241.8 868.4 242.5 871.9 242.5 877.0C242.5 882.1 241.8 885.6 243.6 892.4C245.4 899.2 249.7 910.5 253.3 917.7C256.9 924.9 260.2 930.1 265.2 935.6C270.1 941.1 280.0 948.0 283.0 950.5" fill="none" stroke="#6b3a10" stroke-width="1.1" stroke-dasharray="2.2 1.4"/>
<circle cx="292.5" cy="876.4" r="37.1" fill="none" stroke="#000" stroke-width="1.3"/>
<ellipse cx="291.7" cy="876.8" rx="2" ry="1.4" fill="none" stroke="#000" stroke-width="0.9"/>
<path d="M329.3 858.3C331.1 858.9 337.3 860.5 340.0 862.0C342.7 863.5 344.0 865.2 345.7 867.6C347.4 870.0 349.9 873.6 350.1 876.5C350.3 879.4 349.6 882.0 347.1 884.7C344.6 887.4 338.9 890.8 335.2 892.9C331.5 895.0 326.5 896.6 324.8 897.4" fill="none" stroke="#000" stroke-width="1.2"/>
<rect x="347.5" y="874.5" width="4" height="7" rx="1.5" fill="#0000ff"/>
<path d="M343.4 875.7L352.4 884.7M343.4 884.7L352.4 875.7" stroke="#ff2020" stroke-width="1.2" fill="none"/>
<circle cx="299.9" cy="913" r="2.3" fill="#ff0000"/>
<rect x="509.5" y="802.5" width="151.0" height="148.0" fill="none" stroke="#222" stroke-width="1"/>
<path d="M501.0 802.5H509.5M505.0 804.5H509.5M505.0 806.5H509.5M505.0 808.5H509.5M505.0 809.5H509.5M505.0 811.5H509.5M505.0 813.5H509.5M505.0 815.5H509.5M505.0 817.5H509.5M505.0 819.5H509.5M501.0 821.5H509.5M505.0 822.5H509.5M505.0 824.5H509.5M505.0 826.5H509.5M505.0 828.5H509.5M505.0 830.5H509.5M505.0 832.5H509.5M505.0 833.5H509.5M505.0 835.5H509.5M505.0 837.5H509.5M501.0 839.5H509.5M505.0 841.5H509.5M505.0 843.5H509.5M505.0 845.5H509.5M505.0 846.5H509.5M505.0 848.5H509.5M505.0 850.5H509.5M505.0 852.5H509.5M505.0 854.5H509.5M505.0 856.5H509.5M501.0 858.5H509.5M505.0 859.5H509.5M505.0 861.5H509.5M505.0 863.5H509.5M505.0 865.5H509.5M505.0 867.5H509.5M505.0 869.5H509.5M505.0 870.5H509.5M505.0 872.5H509.5M505.0 874.5H509.5M501.0 876.5H509.5M505.0 878.5H509.5M505.0 880.5H509.5M505.0 882.5H509.5M505.0 883.5H509.5M505.0 885.5H509.5M505.0 887.5H509.5M505.0 889.5H509.5M505.0 891.5H509.5M505.0 893.5H509.5M501.0 895.5H509.5M505.0 896.5H509.5M505.0 898.5H509.5M505.0 900.5H509.5M505.0 902.5H509.5M505.0 904.5H509.5M505.0 906.5H509.5M505.0 907.5H509.5M505.0 909.5H509.5M505.0 911.5H509.5M501.0 913.5H509.5M505.0 915.5H509.5M505.0 917.5H509.5M505.0 919.5H509.5M505.0 920.5H509.5M505.0 922.5H509.5M505.0 924.5H509.5M505.0 926.5H509.5M505.0 928.5H509.5M505.0 930.5H509.5M501.0 932.5H509.5M505.0 933.5H509.5M505.0 935.5H509.5M505.0 937.5H509.5M505.0 939.5H509.5M505.0 941.5H509.5M505.0 943.5H509.5M505.0 944.5H509.5M505.0 946.5H509.5M505.0 948.5H509.5M501.0 950.5H509.5" stroke="#222" stroke-width="1" fill="none"/>
<text x="495.7" y="807.1" font-size="12.5" text-anchor="end" fill="#222" >40.</text>
<text x="495.7" y="825.6" font-size="12.5" text-anchor="end" fill="#222" >30.</text>
<text x="495.7" y="844.1" font-size="12.5" text-anchor="end" fill="#222" >20.</text>
<text x="495.7" y="862.6" font-size="12.5" text-anchor="end" fill="#222" >10.</text>
<text x="495.7" y="881.1" font-size="12.5" text-anchor="end" fill="#222" >0.</text>
<text x="495.7" y="899.6" font-size="12.5" text-anchor="end" fill="#222" >–10.</text>
<text x="495.7" y="918.1" font-size="12.5" text-anchor="end" fill="#222" >–20.</text>
<text x="495.7" y="936.6" font-size="12.5" text-anchor="end" fill="#222" >–30.</text>
<text x="495.7" y="955.1" font-size="12.5" text-anchor="end" fill="#222" >–40.</text>
<path d="M509.5 950.5V958.5M528.5 950.5V954.5M547.5 950.5V958.5M566.5 950.5V954.5M585.5 950.5V958.5M603.5 950.5V954.5M622.5 950.5V958.5M641.5 950.5V954.5M660.5 950.5V958.5" stroke="#222" stroke-width="1" fill="none"/>
<text x="509.5" y="974" font-size="12.5" text-anchor="middle" fill="#222" >40.</text>
<text x="547.2" y="974" font-size="12.5" text-anchor="middle" fill="#222" >20.</text>
<text x="585.0" y="974" font-size="12.5" text-anchor="middle" fill="#222" >0.</text>
<text x="622.8" y="974" font-size="12.5" text-anchor="middle" fill="#222" >–20.</text>
<text x="660.5" y="974" font-size="12.5" text-anchor="middle" fill="#222" >–40.</text>
<text x="585.0" y="991.5" font-size="12.5" text-anchor="middle" textLength="37" lengthAdjust="spacingAndGlyphs" fill="#222" >KSM-X</text>
<text transform="translate(460.7,877) rotate(-90)" font-size="12.5" text-anchor="middle" textLength="37" lengthAdjust="spacingAndGlyphs" fill="#222">KSM-Z</text>
<path d="M542.8 802.5C541.8 804.6 538.7 810.9 536.5 815.0C534.3 819.1 531.6 822.1 529.4 827.3C527.1 832.5 524.6 840.3 523.0 846.0C521.4 851.7 520.4 856.4 519.7 861.6C519.0 866.8 518.9 871.9 518.9 877.0C518.9 882.1 519.0 887.2 519.7 892.4C520.4 897.6 521.4 902.3 523.0 908.0C524.6 913.7 527.1 921.5 529.4 926.7C531.6 931.9 534.1 935.0 536.5 939.0C538.9 943.0 542.3 948.6 543.5 950.5" fill="none" stroke="#0000ff" stroke-width="1.1" stroke-dasharray="2.2 1.4"/>
<path d="M577.8 802.5C574.7 805.1 564.3 812.8 559.2 818.4C554.1 824.0 550.9 829.1 547.3 836.3C543.7 843.5 539.4 854.8 537.6 861.6C535.8 868.4 536.5 871.9 536.5 877.0C536.5 882.1 535.8 885.6 537.6 892.4C539.4 899.2 543.7 910.5 547.3 917.7C550.9 924.9 554.2 930.1 559.2 935.6C564.2 941.1 574.0 948.0 577.0 950.5" fill="none" stroke="#6b3a10" stroke-width="1.1" stroke-dasharray="2.2 1.4"/>
<path d="M549 867.6L623.6 886.2" stroke="#000" stroke-width="1.8"/>
<ellipse cx="585.3" cy="877" rx="2" ry="1.4" fill="none" stroke="#000" stroke-width="0.9"/>
<rect x="592" y="876.8" width="4" height="4" fill="#ff0000"/>
<path d="M617.3 844.9C619.3 845.0 625.7 844.4 629.2 845.2C632.7 846.0 635.8 847.5 638.2 849.7C640.6 851.9 642.9 855.6 643.4 858.6C643.9 861.6 642.7 864.6 641.1 867.6C639.5 870.6 636.7 874.0 633.7 876.5C630.7 879.0 625.0 881.5 623.3 882.5" fill="none" stroke="#000" stroke-width="1.2"/>
<path d="M617.3 844.9L623 844.9" stroke="#000" stroke-width="1.8"/>
<rect x="641" y="853" width="4.5" height="7" rx="1.8" fill="#0000ff"/>
<path d="M636.9 848.2L645.9 857.2M636.9 857.2L645.9 848.2" stroke="#ff2020" stroke-width="1.2" fill="none"/>
<rect x="803.5" y="802.5" width="151.0" height="148.0" fill="none" stroke="#222" stroke-width="1"/>
<path d="M795.0 802.5H803.5M799.0 804.5H803.5M799.0 806.5H803.5M799.0 808.5H803.5M799.0 809.5H803.5M799.0 811.5H803.5M799.0 813.5H803.5M799.0 815.5H803.5M799.0 817.5H803.5M799.0 819.5H803.5M795.0 821.5H803.5M799.0 822.5H803.5M799.0 824.5H803.5M799.0 826.5H803.5M799.0 828.5H803.5M799.0 830.5H803.5M799.0 832.5H803.5M799.0 833.5H803.5M799.0 835.5H803.5M799.0 837.5H803.5M795.0 839.5H803.5M799.0 841.5H803.5M799.0 843.5H803.5M799.0 845.5H803.5M799.0 846.5H803.5M799.0 848.5H803.5M799.0 850.5H803.5M799.0 852.5H803.5M799.0 854.5H803.5M799.0 856.5H803.5M795.0 858.5H803.5M799.0 859.5H803.5M799.0 861.5H803.5M799.0 863.5H803.5M799.0 865.5H803.5M799.0 867.5H803.5M799.0 869.5H803.5M799.0 870.5H803.5M799.0 872.5H803.5M799.0 874.5H803.5M795.0 876.5H803.5M799.0 878.5H803.5M799.0 880.5H803.5M799.0 882.5H803.5M799.0 883.5H803.5M799.0 885.5H803.5M799.0 887.5H803.5M799.0 889.5H803.5M799.0 891.5H803.5M799.0 893.5H803.5M795.0 895.5H803.5M799.0 896.5H803.5M799.0 898.5H803.5M799.0 900.5H803.5M799.0 902.5H803.5M799.0 904.5H803.5M799.0 906.5H803.5M799.0 907.5H803.5M799.0 909.5H803.5M799.0 911.5H803.5M795.0 913.5H803.5M799.0 915.5H803.5M799.0 917.5H803.5M799.0 919.5H803.5M799.0 920.5H803.5M799.0 922.5H803.5M799.0 924.5H803.5M799.0 926.5H803.5M799.0 928.5H803.5M799.0 930.5H803.5M795.0 932.5H803.5M799.0 933.5H803.5M799.0 935.5H803.5M799.0 937.5H803.5M799.0 939.5H803.5M799.0 941.5H803.5M799.0 943.5H803.5M799.0 944.5H803.5M799.0 946.5H803.5M799.0 948.5H803.5M795.0 950.5H803.5" stroke="#222" stroke-width="1" fill="none"/>
<text x="789.7" y="807.1" font-size="12.5" text-anchor="end" fill="#222" >40.</text>
<text x="789.7" y="825.6" font-size="12.5" text-anchor="end" fill="#222" >30.</text>
<text x="789.7" y="844.1" font-size="12.5" text-anchor="end" fill="#222" >20.</text>
<text x="789.7" y="862.6" font-size="12.5" text-anchor="end" fill="#222" >10.</text>
<text x="789.7" y="881.1" font-size="12.5" text-anchor="end" fill="#222" >0.</text>
<text x="789.7" y="899.6" font-size="12.5" text-anchor="end" fill="#222" >–10.</text>
<text x="789.7" y="918.1" font-size="12.5" text-anchor="end" fill="#222" >–20.</text>
<text x="789.7" y="936.6" font-size="12.5" text-anchor="end" fill="#222" >–30.</text>
<text x="789.7" y="955.1" font-size="12.5" text-anchor="end" fill="#222" >–40.</text>
<path d="M803.5 950.5V958.5M822.5 950.5V954.5M841.5 950.5V958.5M860.5 950.5V954.5M879.5 950.5V958.5M897.5 950.5V954.5M916.5 950.5V958.5M935.5 950.5V954.5M954.5 950.5V958.5" stroke="#222" stroke-width="1" fill="none"/>
<text x="803.5" y="974" font-size="12.5" text-anchor="middle" fill="#222" >–40.</text>
<text x="841.2" y="974" font-size="12.5" text-anchor="middle" fill="#222" >–20.</text>
<text x="879.0" y="974" font-size="12.5" text-anchor="middle" fill="#222" >0.</text>
<text x="916.8" y="974" font-size="12.5" text-anchor="middle" fill="#222" >20.</text>
<text x="954.5" y="974" font-size="12.5" text-anchor="middle" fill="#222" >40.</text>
<text x="879.0" y="991.5" font-size="12.5" text-anchor="middle" textLength="37" lengthAdjust="spacingAndGlyphs" fill="#222" >KSM-Y</text>
<text transform="translate(754.8,877) rotate(-90)" font-size="12.5" text-anchor="middle" textLength="37" lengthAdjust="spacingAndGlyphs" fill="#222">KSM-Z</text>
<ellipse cx="879.3" cy="876.9" rx="38.3" ry="9.6" fill="none" stroke="#000" stroke-width="1.3" transform="rotate(1.2 879.3 876.9)"/>
<ellipse cx="879.6" cy="876.8" rx="2" ry="1.4" fill="none" stroke="#000" stroke-width="0.9"/>
<circle cx="916.5" cy="878.7" r="2.3" fill="#ff0000"/>
<path d="M860.3 882.5C861.6 880.3 865.3 873.1 868.1 869.1C870.9 865.1 874.0 861.6 877.0 858.6C880.0 855.6 883.3 853.2 886.0 851.2C888.7 849.2 891.0 847.5 893.4 846.4C895.8 845.3 899.4 845.1 900.6 844.8" fill="none" stroke="#000" stroke-width="1.2"/>
<path d="M877.5 858.2L884 852.8" stroke="#0000ff" stroke-width="4" stroke-linecap="round"/>
<path d="M878.8 847.9L887.8 856.9M878.8 856.9L887.8 847.9" stroke="#ff2020" stroke-width="1.2" fill="none"/>
</svg></body></html>
